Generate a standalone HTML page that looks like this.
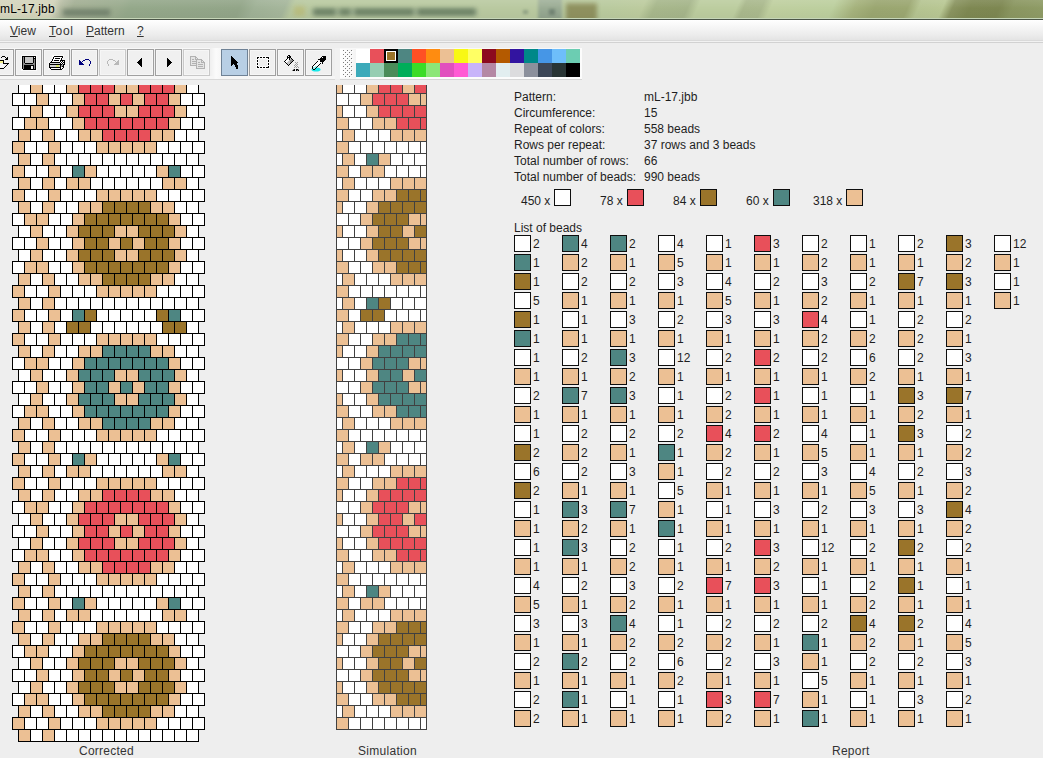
<!DOCTYPE html>
<html><head><meta charset="utf-8"><title>mL-17.jbb</title>
<style>
html,body{margin:0;padding:0}
body{width:1043px;height:758px;overflow:hidden;position:relative;background:#eeeeee;
 font-family:"Liberation Sans",sans-serif;font-size:12px;color:#1e1e1e}
.abs{position:absolute;display:block}
.t{position:absolute;white-space:nowrap;line-height:14px;height:14px}
.lbl{color:#333}
.bx{position:absolute;width:15px;height:15px;border:1px solid #0e0e0e}
.btn{position:absolute;top:49px;width:25px;height:25px;border:1px solid #a0a0a0;background:#f0f0f0;box-shadow:inset 0 0 0 1px #f6f6f6}
.btn.dis{border-color:#c9c9c9}
.btn.sel{border-color:#6f8296;background:#b8cfe5;box-shadow:none}
u{text-decoration:underline}
</style></head><body>

<div class="abs" style="left:0;top:0;width:1043px;height:18px;overflow:hidden;background:#94a88a">
<div style="position:absolute;left:-20px;top:0;width:1090px;height:18px;transform-origin:0 100%;transform:skewX(-24deg);background:
linear-gradient(to right,#d4d5bd 20px,#cfd1b8 66px,#b4bba2 76px,#a2ae93 88px,#9aab8e 134px,#94a88a 145px,#92a588 255px,#9fb196 270px,#a5b69b 300px,#b7c79f 308px,#b9c9a0 320px,#b9c9a0 553px,#b9ca9e 622px,#bccb9e 658px,#a7b78b 670px,#a5b58a 703px,#bccd9f 713px,#bccd9f 752px,#a9b88c 759px,#aab98d 777px,#bfcf9f 786px,#bccf9e 848px,#a5b27c 870px,#9aa670 890px,#9ba771 923px,#b5c491 934px,#b8c793 958px,#8a9460 968px,#7e8852 985px,#7d8751 1015px,#8a9660 1028px,#8f9c66 1063px)"></div>
<div style="position:absolute;left:0;top:0;width:60px;height:18px;background:linear-gradient(to right,#d5d6be 0,#d2d3ba 46px,rgba(210,211,186,0) 60px)"></div>
<div style="position:absolute;left:63px;top:9px;width:47px;height:7px;background:#6e7e6a;filter:blur(2.2px);opacity:.85"></div>
<div style="position:absolute;left:294px;top:6px;width:11px;height:10px;background:#b9bc7c;filter:blur(2px);opacity:.85"></div>
<div style="position:absolute;left:312px;top:8px;width:165px;height:8px;background:#8fa286;filter:blur(2.5px);opacity:.8"></div>
<div style="position:absolute;left:314px;top:9px;width:21px;height:6px;background:#62785c;filter:blur(2.2px);opacity:.8"></div>
<div style="position:absolute;left:340px;top:9px;width:10px;height:6px;background:#62785c;filter:blur(2.2px);opacity:.75"></div>
<div style="position:absolute;left:355px;top:9px;width:58px;height:6px;background:#62785c;filter:blur(2.2px);opacity:.8"></div>
<div style="position:absolute;left:418px;top:9px;width:57px;height:6px;background:#62785c;filter:blur(2.2px);opacity:.8"></div>
<div style="position:absolute;left:538px;top:-4px;width:24px;height:26px;background:linear-gradient(to bottom,#a3b39c,#8c9f8a);filter:blur(1.5px);opacity:.95"></div>
<div style="position:absolute;left:566px;top:3px;width:31px;height:19px;background:#8d8f5c;filter:blur(2px);opacity:.95"></div>
<div style="position:absolute;left:523px;top:10px;width:5px;height:4px;background:#7d9076;filter:blur(1.4px);opacity:.7"></div>
<div style="position:absolute;left:549px;top:9px;width:6px;height:6px;background:#66786a;filter:blur(1.4px);opacity:.75"></div>
<div style="position:absolute;left:0;top:0;width:1043px;height:18px;background:linear-gradient(to bottom,rgba(255,255,255,.10),rgba(255,255,255,.04) 30%,rgba(255,255,255,0) 45%,rgba(0,0,0,.03))"></div>
</div>
<div class="abs" style="left:0;top:18px;width:1043px;height:1px;background:#c6d6b8"></div>
<div class="abs" style="left:0;top:19px;width:1043px;height:1px;background:#4b5648"></div>
<div class="t" style="left:0px;top:2px;color:#000;letter-spacing:.15px;text-shadow:0 0 3px #e2e3cf,0 0 6px #dcddc6">mL-17.jbb</div>

<div class="abs" style="left:0;top:20px;width:1043px;height:21px;background:linear-gradient(to bottom,#ffffff 0,#f7f7f7 30%,#ececec 70%,#e2e2e2 100%)"></div>
<div class="abs" style="left:0;top:40px;width:1043px;height:1px;background:#dadada"></div>
<div class="abs" style="left:0;top:41px;width:1043px;height:1px;background:#f2f2f2"></div>
<div class="abs" style="left:0;top:42px;width:1043px;height:1px;background:#d2d2d2"></div>
<div class="t lbl" style="left:10px;top:24px;letter-spacing:.05px"><u>V</u>iew</div>
<div class="t lbl" style="left:49px;top:24px;letter-spacing:.6px"><u>T</u>ool</div>
<div class="t lbl" style="left:86px;top:24px;letter-spacing:0px"><u>P</u>attern</div>
<div class="t lbl" style="left:137px;top:24px"><u>?</u></div>

<div class="abs" style="left:0;top:48px;width:213px;height:30px;background:#f0f0f0"></div>
<div class="abs" style="left:0;top:48px;width:213px;height:1px;background:#f8f8f8"></div>
<div class="abs" style="left:210px;top:48px;width:11px;height:31px;background:linear-gradient(to right,#efefef,#fbfbfb 55%,#f6f6f6)"></div>
<div class="abs" style="left:221px;top:48px;width:114px;height:30px;background:#f0f0f0"></div>
<div class="abs" style="left:335px;top:48px;width:5px;height:31px;background:#f2f2f2"></div>
<div class="abs" style="left:340px;top:48px;width:242px;height:31px;background:#f8f8f8"></div>
<div class="abs" style="left:340px;top:49px;width:16px;height:29px;background:linear-gradient(to right,#ffffff,#f4f4f4)"></div>
<div class="abs" style="left:0;top:76px;width:213px;height:3px;background:#f6f6f6"></div>
<div class="abs" style="left:221px;top:76px;width:114px;height:3px;background:#f6f6f6"></div>
<div class="abs" style="left:0;top:79px;width:335px;height:1px;background:#d9d9d9"></div>
<div class="abs" style="left:340px;top:79px;width:242px;height:1px;background:#d6d6d6"></div>
<div class="btn" style="left:-13px"></div>
<div class="btn" style="left:15px"></div>
<div class="btn" style="left:43px"></div>
<div class="btn" style="left:71px"></div>
<div class="btn dis" style="left:99px"></div>
<div class="btn" style="left:127px"></div>
<div class="btn" style="left:155px"></div>
<div class="btn dis" style="left:183px"></div>
<div class="btn sel" style="left:221px"></div>
<div class="btn" style="left:249px"></div>
<div class="btn" style="left:277px"></div>
<div class="btn" style="left:305px"></div>
<svg class="abs" style="left:0;top:44px" width="600" height="40" viewBox="0 44 600 40" shape-rendering="crispEdges">
<rect x="1" y="57" width="1" height="1" fill="#000000"/><rect x="2" y="56" width="1" height="1" fill="#000000"/><rect x="3" y="56" width="1" height="1" fill="#000000"/><rect x="4" y="56" width="1" height="1" fill="#000000"/><rect x="5" y="57" width="1" height="1" fill="#000000"/><rect x="6" y="58" width="1" height="1" fill="#000000"/><rect x="7" y="57" width="1" height="1" fill="#000000"/><rect x="7" y="58" width="1" height="1" fill="#000000"/><rect x="7" y="59" width="1" height="1" fill="#000000"/><rect x="6" y="59" width="1" height="1" fill="#000000"/><rect x="5" y="59" width="1" height="1" fill="#000000"/>
<rect x="0" y="60" width="4" height="1" fill="#000"/><rect x="0" y="61" width="3" height="2" fill="#f4f08c"/><rect x="3" y="61" width="1" height="3" fill="#000"/>
<rect x="0" y="64" width="4" height="4" fill="#f6f6f6"/>
<rect x="3" y="63" width="6" height="1" fill="#000"/>
<rect x="8" y="63" width="1" height="1" fill="#000000"/><rect x="7" y="64" width="1" height="1" fill="#000000"/><rect x="6" y="65" width="1" height="1" fill="#000000"/><rect x="5" y="66" width="1" height="1" fill="#000000"/><rect x="4" y="67" width="1" height="1" fill="#000000"/>
<rect x="8" y="64" width="1" height="1" fill="#eeeeee"/><rect x="7" y="65" width="1" height="1" fill="#eeeeee"/><rect x="6" y="66" width="1" height="1" fill="#eeeeee"/><rect x="5" y="67" width="1" height="1" fill="#eeeeee"/><rect x="8" y="65" width="1" height="1" fill="#eeeeee"/><rect x="7" y="66" width="1" height="1" fill="#eeeeee"/><rect x="6" y="67" width="1" height="1" fill="#eeeeee"/><rect x="8" y="66" width="1" height="1" fill="#eeeeee"/><rect x="7" y="67" width="1" height="1" fill="#eeeeee"/><rect x="8" y="67" width="1" height="1" fill="#eeeeee"/>
<rect x="0" y="68" width="4" height="1" fill="#000"/>
<rect x="21" y="55" width="16" height="16" fill="#fbfbfb"/>
<rect x="22" y="56" width="14" height="1" fill="#000"/><rect x="22" y="57" width="1" height="1" fill="#000"/><rect x="23" y="57" width="1" height="1" fill="#8a8a8a"/><rect x="24" y="57" width="1" height="1" fill="#000"/><rect x="25" y="57" width="8" height="1" fill="#c6c6c6"/><rect x="33" y="57" width="1" height="1" fill="#000"/><rect x="34" y="57" width="1" height="1" fill="#f2f2f2"/><rect x="35" y="57" width="1" height="1" fill="#000"/><rect x="22" y="58" width="1" height="1" fill="#000"/><rect x="23" y="58" width="1" height="1" fill="#8a8a8a"/><rect x="24" y="58" width="1" height="1" fill="#000"/><rect x="25" y="58" width="8" height="1" fill="#c6c6c6"/><rect x="33" y="58" width="3" height="1" fill="#000"/><rect x="22" y="59" width="1" height="1" fill="#000"/><rect x="23" y="59" width="1" height="1" fill="#8a8a8a"/><rect x="24" y="59" width="1" height="1" fill="#000"/><rect x="25" y="59" width="8" height="1" fill="#c6c6c6"/><rect x="33" y="59" width="1" height="1" fill="#000"/><rect x="34" y="59" width="1" height="1" fill="#8a8a8a"/><rect x="35" y="59" width="1" height="1" fill="#000"/><rect x="22" y="60" width="1" height="1" fill="#000"/><rect x="23" y="60" width="1" height="1" fill="#8a8a8a"/><rect x="24" y="60" width="1" height="1" fill="#000"/><rect x="25" y="60" width="8" height="1" fill="#c6c6c6"/><rect x="33" y="60" width="1" height="1" fill="#000"/><rect x="34" y="60" width="1" height="1" fill="#8a8a8a"/><rect x="35" y="60" width="1" height="1" fill="#000"/><rect x="22" y="61" width="1" height="1" fill="#000"/><rect x="23" y="61" width="1" height="1" fill="#8a8a8a"/><rect x="24" y="61" width="1" height="1" fill="#000"/><rect x="25" y="61" width="8" height="1" fill="#c6c6c6"/><rect x="33" y="61" width="1" height="1" fill="#000"/><rect x="34" y="61" width="1" height="1" fill="#8a8a8a"/><rect x="35" y="61" width="1" height="1" fill="#000"/><rect x="22" y="62" width="1" height="1" fill="#000"/><rect x="23" y="62" width="1" height="1" fill="#8a8a8a"/><rect x="24" y="62" width="1" height="1" fill="#000"/><rect x="25" y="62" width="8" height="1" fill="#c6c6c6"/><rect x="33" y="62" width="1" height="1" fill="#000"/><rect x="34" y="62" width="1" height="1" fill="#8a8a8a"/><rect x="35" y="62" width="1" height="1" fill="#000"/><rect x="22" y="63" width="1" height="1" fill="#000"/><rect x="23" y="63" width="2" height="1" fill="#8a8a8a"/><rect x="25" y="63" width="8" height="1" fill="#000"/><rect x="33" y="63" width="2" height="1" fill="#8a8a8a"/><rect x="35" y="63" width="1" height="1" fill="#000"/><rect x="22" y="64" width="1" height="1" fill="#000"/><rect x="23" y="64" width="12" height="1" fill="#8a8a8a"/><rect x="35" y="64" width="1" height="1" fill="#000"/><rect x="22" y="65" width="1" height="1" fill="#000"/><rect x="23" y="65" width="1" height="1" fill="#8a8a8a"/><rect x="24" y="65" width="10" height="1" fill="#000"/><rect x="34" y="65" width="1" height="1" fill="#8a8a8a"/><rect x="35" y="65" width="1" height="1" fill="#000"/><rect x="22" y="66" width="1" height="1" fill="#000"/><rect x="23" y="66" width="1" height="1" fill="#8a8a8a"/><rect x="24" y="66" width="7" height="1" fill="#000"/><rect x="31" y="66" width="2" height="1" fill="#f2f2f2"/><rect x="33" y="66" width="1" height="1" fill="#000"/><rect x="34" y="66" width="1" height="1" fill="#8a8a8a"/><rect x="35" y="66" width="1" height="1" fill="#000"/><rect x="22" y="67" width="1" height="1" fill="#000"/><rect x="23" y="67" width="1" height="1" fill="#8a8a8a"/><rect x="24" y="67" width="7" height="1" fill="#000"/><rect x="31" y="67" width="2" height="1" fill="#f2f2f2"/><rect x="33" y="67" width="1" height="1" fill="#000"/><rect x="34" y="67" width="1" height="1" fill="#8a8a8a"/><rect x="35" y="67" width="1" height="1" fill="#000"/><rect x="22" y="68" width="1" height="1" fill="#000"/><rect x="23" y="68" width="1" height="1" fill="#8a8a8a"/><rect x="24" y="68" width="7" height="1" fill="#000"/><rect x="31" y="68" width="2" height="1" fill="#f2f2f2"/><rect x="33" y="68" width="1" height="1" fill="#000"/><rect x="34" y="68" width="1" height="1" fill="#8a8a8a"/><rect x="35" y="68" width="1" height="1" fill="#000"/><rect x="23" y="69" width="13" height="1" fill="#000"/>
<rect x="52" y="55" width="12" height="3" fill="#fbfbfb"/><rect x="48" y="61" width="17" height="9" fill="#f6f6f6"/>
<rect x="54" y="56" width="9" height="1" fill="#000"/><rect x="53" y="57" width="1" height="1" fill="#000"/><rect x="54" y="57" width="8" height="1" fill="#fff"/><rect x="62" y="57" width="1" height="1" fill="#000"/><rect x="53" y="58" width="1" height="1" fill="#000"/><rect x="54" y="58" width="1" height="1" fill="#fff"/><rect x="55" y="58" width="5" height="1" fill="#000"/><rect x="60" y="58" width="1" height="1" fill="#fff"/><rect x="61" y="58" width="1" height="1" fill="#000"/><rect x="52" y="59" width="1" height="1" fill="#000"/><rect x="53" y="59" width="8" height="1" fill="#fff"/><rect x="61" y="59" width="1" height="1" fill="#000"/><rect x="52" y="60" width="1" height="1" fill="#000"/><rect x="53" y="60" width="1" height="1" fill="#fff"/><rect x="54" y="60" width="5" height="1" fill="#000"/><rect x="59" y="60" width="1" height="1" fill="#fff"/><rect x="60" y="60" width="5" height="1" fill="#000"/><rect x="51" y="61" width="1" height="1" fill="#000"/><rect x="52" y="61" width="8" height="1" fill="#fff"/><rect x="60" y="61" width="1" height="1" fill="#000"/><rect x="61" y="61" width="1" height="1" fill="#fff"/><rect x="62" y="61" width="1" height="1" fill="#000"/><rect x="63" y="61" width="1" height="1" fill="#fff"/><rect x="64" y="61" width="1" height="1" fill="#000"/><rect x="50" y="62" width="10" height="1" fill="#000"/><rect x="60" y="62" width="1" height="1" fill="#fff"/><rect x="61" y="62" width="1" height="1" fill="#000"/><rect x="62" y="62" width="1" height="1" fill="#fff"/><rect x="63" y="62" width="2" height="1" fill="#000"/><rect x="49" y="63" width="1" height="1" fill="#000"/><rect x="50" y="63" width="10" height="1" fill="#d4d4d4"/><rect x="60" y="63" width="1" height="1" fill="#000"/><rect x="61" y="63" width="1" height="1" fill="#fff"/><rect x="62" y="63" width="1" height="1" fill="#000"/><rect x="63" y="63" width="1" height="1" fill="#fff"/><rect x="64" y="63" width="1" height="1" fill="#000"/><rect x="49" y="64" width="13" height="1" fill="#000"/><rect x="62" y="64" width="1" height="1" fill="#9a9a9a"/><rect x="63" y="64" width="2" height="1" fill="#000"/><rect x="49" y="65" width="1" height="1" fill="#000"/><rect x="50" y="65" width="6" height="1" fill="#d4d4d4"/><rect x="56" y="65" width="3" height="1" fill="#dfe86a"/><rect x="59" y="65" width="1" height="1" fill="#d4d4d4"/><rect x="60" y="65" width="1" height="1" fill="#000"/><rect x="61" y="65" width="2" height="1" fill="#9a9a9a"/><rect x="63" y="65" width="1" height="1" fill="#000"/><rect x="49" y="66" width="1" height="1" fill="#000"/><rect x="50" y="66" width="6" height="1" fill="#d4d4d4"/><rect x="56" y="66" width="3" height="1" fill="#dfe86a"/><rect x="59" y="66" width="1" height="1" fill="#d4d4d4"/><rect x="60" y="66" width="1" height="1" fill="#000"/><rect x="61" y="66" width="1" height="1" fill="#9a9a9a"/><rect x="62" y="66" width="2" height="1" fill="#000"/><rect x="49" y="67" width="12" height="1" fill="#000"/><rect x="61" y="67" width="2" height="1" fill="#fff"/><rect x="63" y="67" width="1" height="1" fill="#000"/><rect x="50" y="68" width="1" height="1" fill="#000"/><rect x="51" y="68" width="9" height="1" fill="#fff"/><rect x="60" y="68" width="1" height="1" fill="#000"/><rect x="61" y="68" width="1" height="1" fill="#fff"/><rect x="62" y="68" width="1" height="1" fill="#000"/><rect x="51" y="69" width="11" height="1" fill="#000"/>
<rect x="85" y="59" width="1" height="1" fill="#00007e"/><rect x="86" y="59" width="1" height="1" fill="#00007e"/><rect x="87" y="59" width="1" height="1" fill="#00007e"/><rect x="88" y="59" width="1" height="1" fill="#00007e"/><rect x="79" y="60" width="1" height="1" fill="#00007e"/><rect x="83" y="60" width="1" height="1" fill="#00007e"/><rect x="84" y="60" width="1" height="1" fill="#00007e"/><rect x="89" y="60" width="1" height="1" fill="#00007e"/><rect x="79" y="61" width="1" height="1" fill="#00007e"/><rect x="80" y="61" width="1" height="1" fill="#00007e"/><rect x="82" y="61" width="1" height="1" fill="#00007e"/><rect x="90" y="61" width="1" height="1" fill="#00007e"/><rect x="79" y="62" width="1" height="1" fill="#00007e"/><rect x="80" y="62" width="1" height="1" fill="#00007e"/><rect x="81" y="62" width="1" height="1" fill="#00007e"/><rect x="90" y="62" width="1" height="1" fill="#00007e"/><rect x="79" y="63" width="1" height="1" fill="#00007e"/><rect x="80" y="63" width="1" height="1" fill="#00007e"/><rect x="81" y="63" width="1" height="1" fill="#00007e"/><rect x="82" y="63" width="1" height="1" fill="#00007e"/><rect x="90" y="63" width="1" height="1" fill="#00007e"/><rect x="79" y="64" width="1" height="1" fill="#00007e"/><rect x="80" y="64" width="1" height="1" fill="#00007e"/><rect x="81" y="64" width="1" height="1" fill="#00007e"/><rect x="82" y="64" width="1" height="1" fill="#00007e"/><rect x="83" y="64" width="1" height="1" fill="#00007e"/><rect x="89" y="64" width="1" height="1" fill="#00007e"/><rect x="89" y="65" width="1" height="1" fill="#00007e"/>
<rect x="112" y="59" width="1" height="1" fill="#b9b9b9"/><rect x="111" y="59" width="1" height="1" fill="#b9b9b9"/><rect x="110" y="59" width="1" height="1" fill="#b9b9b9"/><rect x="109" y="59" width="1" height="1" fill="#b9b9b9"/><rect x="118" y="60" width="1" height="1" fill="#b9b9b9"/><rect x="114" y="60" width="1" height="1" fill="#b9b9b9"/><rect x="113" y="60" width="1" height="1" fill="#b9b9b9"/><rect x="108" y="60" width="1" height="1" fill="#b9b9b9"/><rect x="118" y="61" width="1" height="1" fill="#b9b9b9"/><rect x="117" y="61" width="1" height="1" fill="#b9b9b9"/><rect x="115" y="61" width="1" height="1" fill="#b9b9b9"/><rect x="107" y="61" width="1" height="1" fill="#b9b9b9"/><rect x="118" y="62" width="1" height="1" fill="#b9b9b9"/><rect x="117" y="62" width="1" height="1" fill="#b9b9b9"/><rect x="116" y="62" width="1" height="1" fill="#b9b9b9"/><rect x="107" y="62" width="1" height="1" fill="#b9b9b9"/><rect x="118" y="63" width="1" height="1" fill="#b9b9b9"/><rect x="117" y="63" width="1" height="1" fill="#b9b9b9"/><rect x="116" y="63" width="1" height="1" fill="#b9b9b9"/><rect x="115" y="63" width="1" height="1" fill="#b9b9b9"/><rect x="107" y="63" width="1" height="1" fill="#b9b9b9"/><rect x="118" y="64" width="1" height="1" fill="#b9b9b9"/><rect x="117" y="64" width="1" height="1" fill="#b9b9b9"/><rect x="116" y="64" width="1" height="1" fill="#b9b9b9"/><rect x="115" y="64" width="1" height="1" fill="#b9b9b9"/><rect x="114" y="64" width="1" height="1" fill="#b9b9b9"/><rect x="108" y="64" width="1" height="1" fill="#b9b9b9"/><rect x="108" y="65" width="1" height="1" fill="#b9b9b9"/>
<rect x="141" y="58" width="1" height="9" fill="#000"/>
<rect x="140" y="59" width="1" height="7" fill="#000"/>
<rect x="139" y="60" width="1" height="5" fill="#000"/>
<rect x="138" y="61" width="1" height="3" fill="#000"/>
<rect x="137" y="62" width="1" height="1" fill="#000"/>
<rect x="167" y="58" width="1" height="9" fill="#000"/>
<rect x="168" y="59" width="1" height="7" fill="#000"/>
<rect x="169" y="60" width="1" height="5" fill="#000"/>
<rect x="170" y="61" width="1" height="3" fill="#000"/>
<rect x="171" y="62" width="1" height="1" fill="#000"/>
<rect x="190" y="56" width="6" height="1" fill="#b2b2b2"/><rect x="190" y="57" width="1" height="1" fill="#b2b2b2"/><rect x="191" y="57" width="4" height="1" fill="#e4e4e4"/><rect x="195" y="57" width="2" height="1" fill="#b2b2b2"/><rect x="190" y="58" width="1" height="1" fill="#b2b2b2"/><rect x="191" y="58" width="4" height="1" fill="#e4e4e4"/><rect x="195" y="58" width="1" height="1" fill="#b2b2b2"/><rect x="196" y="58" width="1" height="1" fill="#e4e4e4"/><rect x="197" y="58" width="1" height="1" fill="#b2b2b2"/><rect x="190" y="59" width="1" height="1" fill="#b2b2b2"/><rect x="191" y="59" width="1" height="1" fill="#e4e4e4"/><rect x="192" y="59" width="2" height="1" fill="#b2b2b2"/><rect x="194" y="59" width="1" height="1" fill="#e4e4e4"/><rect x="195" y="59" width="4" height="1" fill="#b2b2b2"/><rect x="190" y="60" width="1" height="1" fill="#b2b2b2"/><rect x="191" y="60" width="7" height="1" fill="#e4e4e4"/><rect x="198" y="60" width="1" height="1" fill="#b2b2b2"/><rect x="190" y="61" width="1" height="1" fill="#b2b2b2"/><rect x="191" y="61" width="1" height="1" fill="#e4e4e4"/><rect x="192" y="61" width="5" height="1" fill="#b2b2b2"/><rect x="197" y="61" width="1" height="1" fill="#e4e4e4"/><rect x="198" y="61" width="1" height="1" fill="#b2b2b2"/><rect x="190" y="62" width="1" height="1" fill="#b2b2b2"/><rect x="191" y="62" width="7" height="1" fill="#e4e4e4"/><rect x="198" y="62" width="1" height="1" fill="#b2b2b2"/><rect x="190" y="63" width="1" height="1" fill="#b2b2b2"/><rect x="191" y="63" width="1" height="1" fill="#e4e4e4"/><rect x="192" y="63" width="5" height="1" fill="#b2b2b2"/><rect x="197" y="63" width="1" height="1" fill="#e4e4e4"/><rect x="198" y="63" width="1" height="1" fill="#b2b2b2"/><rect x="190" y="64" width="1" height="1" fill="#b2b2b2"/><rect x="191" y="64" width="7" height="1" fill="#e4e4e4"/><rect x="198" y="64" width="1" height="1" fill="#b2b2b2"/><rect x="190" y="65" width="9" height="1" fill="#b2b2b2"/>
<rect x="196" y="59" width="6" height="1" fill="#b2b2b2"/><rect x="196" y="60" width="1" height="1" fill="#b2b2b2"/><rect x="197" y="60" width="4" height="1" fill="#e4e4e4"/><rect x="201" y="60" width="2" height="1" fill="#b2b2b2"/><rect x="196" y="61" width="1" height="1" fill="#b2b2b2"/><rect x="197" y="61" width="4" height="1" fill="#e4e4e4"/><rect x="201" y="61" width="1" height="1" fill="#b2b2b2"/><rect x="202" y="61" width="1" height="1" fill="#e4e4e4"/><rect x="203" y="61" width="1" height="1" fill="#b2b2b2"/><rect x="196" y="62" width="1" height="1" fill="#b2b2b2"/><rect x="197" y="62" width="1" height="1" fill="#e4e4e4"/><rect x="198" y="62" width="2" height="1" fill="#b2b2b2"/><rect x="200" y="62" width="1" height="1" fill="#e4e4e4"/><rect x="201" y="62" width="4" height="1" fill="#b2b2b2"/><rect x="196" y="63" width="1" height="1" fill="#b2b2b2"/><rect x="197" y="63" width="7" height="1" fill="#e4e4e4"/><rect x="204" y="63" width="1" height="1" fill="#b2b2b2"/><rect x="196" y="64" width="1" height="1" fill="#b2b2b2"/><rect x="197" y="64" width="1" height="1" fill="#e4e4e4"/><rect x="198" y="64" width="5" height="1" fill="#b2b2b2"/><rect x="203" y="64" width="1" height="1" fill="#e4e4e4"/><rect x="204" y="64" width="1" height="1" fill="#b2b2b2"/><rect x="196" y="65" width="1" height="1" fill="#b2b2b2"/><rect x="197" y="65" width="7" height="1" fill="#e4e4e4"/><rect x="204" y="65" width="1" height="1" fill="#b2b2b2"/><rect x="196" y="66" width="1" height="1" fill="#b2b2b2"/><rect x="197" y="66" width="1" height="1" fill="#e4e4e4"/><rect x="198" y="66" width="5" height="1" fill="#b2b2b2"/><rect x="203" y="66" width="1" height="1" fill="#e4e4e4"/><rect x="204" y="66" width="1" height="1" fill="#b2b2b2"/><rect x="196" y="67" width="1" height="1" fill="#b2b2b2"/><rect x="197" y="67" width="7" height="1" fill="#e4e4e4"/><rect x="204" y="67" width="1" height="1" fill="#b2b2b2"/><rect x="196" y="68" width="9" height="1" fill="#b2b2b2"/>
<rect x="231" y="56" width="1" height="1" fill="#000"/><rect x="231" y="57" width="2" height="1" fill="#000"/><rect x="231" y="58" width="3" height="1" fill="#000"/><rect x="231" y="59" width="4" height="1" fill="#000"/><rect x="231" y="60" width="5" height="1" fill="#000"/><rect x="231" y="61" width="6" height="1" fill="#000"/><rect x="231" y="62" width="7" height="1" fill="#000"/><rect x="231" y="63" width="6" height="1" fill="#000"/><rect x="231" y="64" width="2" height="1" fill="#000"/><rect x="234" y="64" width="3" height="1" fill="#000"/><rect x="231" y="65" width="1" height="1" fill="#000"/><rect x="235" y="65" width="3" height="1" fill="#000"/><rect x="235" y="66" width="3" height="1" fill="#000"/><rect x="236" y="67" width="2" height="1" fill="#000"/><rect x="236" y="68" width="2" height="1" fill="#000"/>
<rect x="256" y="56" width="14" height="13" fill="#fafafa"/><rect x="259" y="59" width="8" height="7" fill="#eeeeee"/>
<rect x="257" y="57" width="2" height="1" fill="#000"/><rect x="257" y="67" width="2" height="1" fill="#000"/>
<rect x="260" y="57" width="2" height="1" fill="#000"/><rect x="260" y="67" width="2" height="1" fill="#000"/>
<rect x="263" y="57" width="2" height="1" fill="#000"/><rect x="263" y="67" width="2" height="1" fill="#000"/>
<rect x="266" y="57" width="3" height="1" fill="#000"/><rect x="266" y="67" width="3" height="1" fill="#000"/>
<rect x="257" y="57" width="1" height="2" fill="#000"/><rect x="268" y="57" width="1" height="2" fill="#000"/>
<rect x="257" y="60" width="1" height="2" fill="#000"/><rect x="268" y="60" width="1" height="2" fill="#000"/>
<rect x="257" y="63" width="1" height="2" fill="#000"/><rect x="268" y="63" width="1" height="2" fill="#000"/>
<rect x="257" y="66" width="1" height="2" fill="#000"/><rect x="268" y="66" width="1" height="2" fill="#000"/>
<rect x="285" y="61" width="1" height="1" fill="#ffffff"/><rect x="286" y="60" width="1" height="1" fill="#ffffff"/><rect x="286" y="61" width="1" height="1" fill="#ffffff"/><rect x="286" y="62" width="1" height="1" fill="#ffffff"/><rect x="287" y="59" width="1" height="1" fill="#ffffff"/><rect x="287" y="60" width="1" height="1" fill="#ffffff"/><rect x="287" y="61" width="1" height="1" fill="#ffffff"/><rect x="288" y="58" width="1" height="1" fill="#ffffff"/><rect x="288" y="59" width="1" height="1" fill="#ffffff"/><rect x="288" y="60" width="1" height="1" fill="#ffffff"/>
<rect x="287" y="62" width="1" height="1" fill="#c4c4c4"/><rect x="287" y="63" width="1" height="1" fill="#c4c4c4"/><rect x="288" y="61" width="1" height="1" fill="#c4c4c4"/><rect x="288" y="62" width="1" height="1" fill="#c4c4c4"/><rect x="288" y="63" width="1" height="1" fill="#c4c4c4"/><rect x="288" y="64" width="1" height="1" fill="#c4c4c4"/><rect x="289" y="60" width="1" height="1" fill="#c4c4c4"/><rect x="289" y="61" width="1" height="1" fill="#c4c4c4"/><rect x="289" y="62" width="1" height="1" fill="#c4c4c4"/><rect x="289" y="63" width="1" height="1" fill="#c4c4c4"/><rect x="290" y="58" width="1" height="1" fill="#c4c4c4"/><rect x="290" y="59" width="1" height="1" fill="#c4c4c4"/>
<rect x="290" y="60" width="1" height="1" fill="#8c8c8c"/><rect x="290" y="61" width="1" height="1" fill="#8c8c8c"/><rect x="290" y="62" width="1" height="1" fill="#8c8c8c"/><rect x="291" y="59" width="1" height="1" fill="#8c8c8c"/><rect x="291" y="60" width="1" height="1" fill="#8c8c8c"/><rect x="291" y="61" width="1" height="1" fill="#8c8c8c"/><rect x="292" y="60" width="1" height="1" fill="#8c8c8c"/>
<rect x="284" y="61" width="1" height="1" fill="#000000"/><rect x="285" y="60" width="1" height="1" fill="#000000"/><rect x="286" y="59" width="1" height="1" fill="#000000"/><rect x="287" y="58" width="1" height="1" fill="#000000"/><rect x="288" y="57" width="1" height="1" fill="#000000"/><rect x="289" y="57" width="1" height="1" fill="#000000"/><rect x="290" y="57" width="1" height="1" fill="#000000"/><rect x="291" y="58" width="1" height="1" fill="#000000"/><rect x="292" y="59" width="1" height="1" fill="#000000"/><rect x="293" y="60" width="1" height="1" fill="#000000"/><rect x="292" y="61" width="1" height="1" fill="#000000"/><rect x="291" y="62" width="1" height="1" fill="#000000"/><rect x="290" y="63" width="1" height="1" fill="#000000"/><rect x="289" y="64" width="1" height="1" fill="#000000"/><rect x="288" y="65" width="1" height="1" fill="#000000"/><rect x="287" y="64" width="1" height="1" fill="#000000"/><rect x="286" y="63" width="1" height="1" fill="#000000"/><rect x="285" y="62" width="1" height="1" fill="#000000"/>
<rect x="288" y="55" width="1" height="1" fill="#000000"/><rect x="289" y="55" width="1" height="1" fill="#000000"/><rect x="287" y="56" width="1" height="1" fill="#000000"/><rect x="287" y="57" width="1" height="1" fill="#000000"/><rect x="290" y="56" width="1" height="1" fill="#000000"/><rect x="289" y="58" width="1" height="1" fill="#000000"/><rect x="289" y="59" width="1" height="1" fill="#000000"/><rect x="289" y="56" width="1" height="1" fill="#000000"/>
<rect x="295" y="62" width="1" height="1" fill="#9c9c9c"/><rect x="297" y="62" width="1" height="1" fill="#9c9c9c"/><rect x="296" y="63" width="1" height="1" fill="#9c9c9c"/><rect x="295" y="64" width="1" height="1" fill="#9c9c9c"/><rect x="297" y="64" width="1" height="1" fill="#9c9c9c"/><rect x="296" y="65" width="1" height="1" fill="#9c9c9c"/><rect x="294" y="65" width="1" height="1" fill="#9c9c9c"/><rect x="295" y="66" width="1" height="1" fill="#9c9c9c"/><rect x="297" y="66" width="1" height="1" fill="#9c9c9c"/><rect x="296" y="67" width="1" height="1" fill="#9c9c9c"/><rect x="298" y="67" width="1" height="1" fill="#9c9c9c"/><rect x="294" y="67" width="1" height="1" fill="#9c9c9c"/>
<rect x="294" y="69" width="1" height="1" fill="#000000"/><rect x="293" y="70" width="1" height="1" fill="#000000"/><rect x="294" y="70" width="1" height="1" fill="#000000"/><rect x="296" y="69" width="1" height="1" fill="#000000"/><rect x="297" y="69" width="1" height="1" fill="#000000"/><rect x="296" y="70" width="1" height="1" fill="#000000"/><rect x="298" y="70" width="1" height="1" fill="#000000"/>
<rect x="293" y="69" width="1" height="1" fill="#8e8e8e"/><rect x="292" y="70" width="1" height="1" fill="#8e8e8e"/><rect x="298" y="69" width="1" height="1" fill="#8e8e8e"/><rect x="297" y="70" width="1" height="1" fill="#8e8e8e"/>
<ellipse cx="316" cy="69.5" rx="4.5" ry="2" fill="#19e8e8" shape-rendering="auto"/>
<rect x="322" y="56" width="4" height="1" fill="#000"/><rect x="321" y="57" width="1" height="1" fill="#000"/><rect x="322" y="57" width="1" height="1" fill="#fff"/><rect x="323" y="57" width="3" height="1" fill="#000"/><rect x="320" y="58" width="6" height="1" fill="#000"/><rect x="318" y="59" width="8" height="1" fill="#000"/><rect x="320" y="60" width="5" height="1" fill="#000"/><rect x="320" y="61" width="4" height="1" fill="#000"/><rect x="322" y="62" width="1" height="1" fill="#000"/><rect x="322" y="63" width="1" height="1" fill="#000"/>
<rect x="317" y="61" width="1" height="1" fill="#000000"/><rect x="316" y="62" width="1" height="1" fill="#000000"/><rect x="315" y="63" width="1" height="1" fill="#000000"/><rect x="314" y="64" width="1" height="1" fill="#000000"/><rect x="313" y="65" width="1" height="1" fill="#000000"/><rect x="312" y="66" width="1" height="1" fill="#000000"/><rect x="312" y="67" width="1" height="1" fill="#000000"/><rect x="312" y="68" width="1" height="1" fill="#000000"/><rect x="313" y="69" width="1" height="1" fill="#000000"/><rect x="314" y="69" width="1" height="1" fill="#000000"/><rect x="320" y="63" width="1" height="1" fill="#000000"/><rect x="319" y="64" width="1" height="1" fill="#000000"/><rect x="318" y="65" width="1" height="1" fill="#000000"/><rect x="317" y="66" width="1" height="1" fill="#000000"/><rect x="316" y="67" width="1" height="1" fill="#000000"/><rect x="315" y="68" width="1" height="1" fill="#000000"/>
<rect x="318" y="61" width="1" height="1" fill="#ffffff"/><rect x="319" y="61" width="1" height="1" fill="#ffffff"/><rect x="317" y="62" width="1" height="1" fill="#ffffff"/><rect x="318" y="62" width="1" height="1" fill="#ffffff"/><rect x="319" y="62" width="1" height="1" fill="#ffffff"/><rect x="316" y="63" width="1" height="1" fill="#ffffff"/><rect x="317" y="63" width="1" height="1" fill="#ffffff"/><rect x="318" y="63" width="1" height="1" fill="#ffffff"/><rect x="319" y="63" width="1" height="1" fill="#ffffff"/><rect x="315" y="64" width="1" height="1" fill="#ffffff"/><rect x="316" y="64" width="1" height="1" fill="#ffffff"/><rect x="317" y="64" width="1" height="1" fill="#ffffff"/><rect x="318" y="64" width="1" height="1" fill="#ffffff"/><rect x="314" y="65" width="1" height="1" fill="#ffffff"/><rect x="315" y="65" width="1" height="1" fill="#ffffff"/><rect x="316" y="65" width="1" height="1" fill="#ffffff"/><rect x="317" y="65" width="1" height="1" fill="#ffffff"/><rect x="313" y="66" width="1" height="1" fill="#ffffff"/><rect x="314" y="66" width="1" height="1" fill="#ffffff"/>
<rect x="315" y="66" width="1" height="1" fill="#9af0f0"/><rect x="316" y="66" width="1" height="1" fill="#9af0f0"/><rect x="313" y="67" width="1" height="1" fill="#9af0f0"/><rect x="314" y="67" width="1" height="1" fill="#9af0f0"/><rect x="315" y="67" width="1" height="1" fill="#9af0f0"/><rect x="313" y="68" width="1" height="1" fill="#9af0f0"/><rect x="314" y="68" width="1" height="1" fill="#9af0f0"/>
<rect x="343" y="50" width="1" height="1" fill="#7c7c7c"/><rect x="344" y="51" width="1" height="1" fill="#ffffff"/>
<rect x="347" y="50" width="1" height="1" fill="#7c7c7c"/><rect x="348" y="51" width="1" height="1" fill="#ffffff"/>
<rect x="351" y="50" width="1" height="1" fill="#7c7c7c"/><rect x="352" y="51" width="1" height="1" fill="#ffffff"/>
<rect x="345" y="52" width="1" height="1" fill="#7c7c7c"/><rect x="346" y="53" width="1" height="1" fill="#ffffff"/>
<rect x="349" y="52" width="1" height="1" fill="#7c7c7c"/><rect x="350" y="53" width="1" height="1" fill="#ffffff"/>
<rect x="343" y="54" width="1" height="1" fill="#7c7c7c"/><rect x="344" y="55" width="1" height="1" fill="#ffffff"/>
<rect x="347" y="54" width="1" height="1" fill="#7c7c7c"/><rect x="348" y="55" width="1" height="1" fill="#ffffff"/>
<rect x="351" y="54" width="1" height="1" fill="#7c7c7c"/><rect x="352" y="55" width="1" height="1" fill="#ffffff"/>
<rect x="345" y="56" width="1" height="1" fill="#7c7c7c"/><rect x="346" y="57" width="1" height="1" fill="#ffffff"/>
<rect x="349" y="56" width="1" height="1" fill="#7c7c7c"/><rect x="350" y="57" width="1" height="1" fill="#ffffff"/>
<rect x="343" y="58" width="1" height="1" fill="#7c7c7c"/><rect x="344" y="59" width="1" height="1" fill="#ffffff"/>
<rect x="347" y="58" width="1" height="1" fill="#7c7c7c"/><rect x="348" y="59" width="1" height="1" fill="#ffffff"/>
<rect x="351" y="58" width="1" height="1" fill="#7c7c7c"/><rect x="352" y="59" width="1" height="1" fill="#ffffff"/>
<rect x="345" y="60" width="1" height="1" fill="#7c7c7c"/><rect x="346" y="61" width="1" height="1" fill="#ffffff"/>
<rect x="349" y="60" width="1" height="1" fill="#7c7c7c"/><rect x="350" y="61" width="1" height="1" fill="#ffffff"/>
<rect x="343" y="62" width="1" height="1" fill="#7c7c7c"/><rect x="344" y="63" width="1" height="1" fill="#ffffff"/>
<rect x="347" y="62" width="1" height="1" fill="#7c7c7c"/><rect x="348" y="63" width="1" height="1" fill="#ffffff"/>
<rect x="351" y="62" width="1" height="1" fill="#7c7c7c"/><rect x="352" y="63" width="1" height="1" fill="#ffffff"/>
<rect x="345" y="64" width="1" height="1" fill="#7c7c7c"/><rect x="346" y="65" width="1" height="1" fill="#ffffff"/>
<rect x="349" y="64" width="1" height="1" fill="#7c7c7c"/><rect x="350" y="65" width="1" height="1" fill="#ffffff"/>
<rect x="343" y="66" width="1" height="1" fill="#7c7c7c"/><rect x="344" y="67" width="1" height="1" fill="#ffffff"/>
<rect x="347" y="66" width="1" height="1" fill="#7c7c7c"/><rect x="348" y="67" width="1" height="1" fill="#ffffff"/>
<rect x="351" y="66" width="1" height="1" fill="#7c7c7c"/><rect x="352" y="67" width="1" height="1" fill="#ffffff"/>
<rect x="345" y="68" width="1" height="1" fill="#7c7c7c"/><rect x="346" y="69" width="1" height="1" fill="#ffffff"/>
<rect x="349" y="68" width="1" height="1" fill="#7c7c7c"/><rect x="350" y="69" width="1" height="1" fill="#ffffff"/>
<rect x="343" y="70" width="1" height="1" fill="#7c7c7c"/><rect x="344" y="71" width="1" height="1" fill="#ffffff"/>
<rect x="347" y="70" width="1" height="1" fill="#7c7c7c"/><rect x="348" y="71" width="1" height="1" fill="#ffffff"/>
<rect x="351" y="70" width="1" height="1" fill="#7c7c7c"/><rect x="352" y="71" width="1" height="1" fill="#ffffff"/>
<rect x="345" y="72" width="1" height="1" fill="#7c7c7c"/><rect x="346" y="73" width="1" height="1" fill="#ffffff"/>
<rect x="349" y="72" width="1" height="1" fill="#7c7c7c"/><rect x="350" y="73" width="1" height="1" fill="#ffffff"/>
<rect x="343" y="74" width="1" height="1" fill="#7c7c7c"/><rect x="344" y="75" width="1" height="1" fill="#ffffff"/>
<rect x="347" y="74" width="1" height="1" fill="#7c7c7c"/><rect x="348" y="75" width="1" height="1" fill="#ffffff"/>
<rect x="351" y="74" width="1" height="1" fill="#7c7c7c"/><rect x="352" y="75" width="1" height="1" fill="#ffffff"/>
<rect x="345" y="76" width="1" height="1" fill="#7c7c7c"/><rect x="346" y="77" width="1" height="1" fill="#ffffff"/>
<rect x="349" y="76" width="1" height="1" fill="#7c7c7c"/><rect x="350" y="77" width="1" height="1" fill="#ffffff"/>
<rect x="356" y="49" width="14" height="14" fill="#ffffff"/>
<rect x="370" y="49" width="14" height="14" fill="#e8505a"/>
<rect x="384" y="49" width="14" height="14" fill="#9a742a"/>
<rect x="398" y="49" width="14" height="14" fill="#4e8682"/>
<rect x="412" y="49" width="14" height="14" fill="#ff5024"/>
<rect x="426" y="49" width="14" height="14" fill="#ff8c10"/>
<rect x="440" y="49" width="14" height="14" fill="#ecc094"/>
<rect x="454" y="49" width="14" height="14" fill="#f8f814"/>
<rect x="468" y="49" width="14" height="14" fill="#ffff64"/>
<rect x="482" y="49" width="14" height="14" fill="#8c0a1e"/>
<rect x="496" y="49" width="14" height="14" fill="#b45a00"/>
<rect x="510" y="49" width="14" height="14" fill="#3214a0"/>
<rect x="524" y="49" width="14" height="14" fill="#008888"/>
<rect x="538" y="49" width="14" height="14" fill="#4696e6"/>
<rect x="552" y="49" width="14" height="14" fill="#6ebefa"/>
<rect x="566" y="49" width="14" height="14" fill="#6ccdb2"/>
<rect x="356" y="63" width="14" height="14" fill="#3caaba"/>
<rect x="370" y="63" width="14" height="14" fill="#96cdb2"/>
<rect x="384" y="63" width="14" height="14" fill="#4b8c5a"/>
<rect x="398" y="63" width="14" height="14" fill="#00ae5a"/>
<rect x="412" y="63" width="14" height="14" fill="#3cdc28"/>
<rect x="426" y="63" width="14" height="14" fill="#8ce678"/>
<rect x="440" y="63" width="14" height="14" fill="#e150be"/>
<rect x="454" y="63" width="14" height="14" fill="#ff5ad4"/>
<rect x="468" y="63" width="14" height="14" fill="#c8b4fa"/>
<rect x="482" y="63" width="14" height="14" fill="#b488a4"/>
<rect x="496" y="63" width="14" height="14" fill="#e2eef0"/>
<rect x="510" y="63" width="14" height="14" fill="#dcdcde"/>
<rect x="524" y="63" width="14" height="14" fill="#8c909c"/>
<rect x="538" y="63" width="14" height="14" fill="#3c4656"/>
<rect x="552" y="63" width="14" height="14" fill="#283434"/>
<rect x="566" y="63" width="14" height="14" fill="#000000"/>
<rect x="384" y="49" width="14" height="14" fill="#000"/><rect x="386" y="51" width="10" height="10" fill="#fff"/><rect x="387" y="52" width="8" height="8" fill="#9a742a"/>
<rect x="580" y="48" width="2" height="31" fill="#fcfcfc"/><rect x="356" y="77" width="226" height="2" fill="#fcfcfc"/>
</svg>
<svg class="abs" style="left:0;top:85px" width="220" height="660" viewBox="0 85 220 660" shape-rendering="crispEdges"><rect x="18" y="81" width="181" height="13" fill="#000"/><rect x="19" y="82" width="11" height="11" fill="#ffffff"/><rect x="31" y="82" width="11" height="11" fill="#ecc094"/><rect x="43" y="82" width="11" height="11" fill="#ffffff"/><rect x="55" y="82" width="11" height="11" fill="#ffffff"/><rect x="67" y="82" width="11" height="11" fill="#ecc094"/><rect x="79" y="82" width="11" height="11" fill="#e8505a"/><rect x="91" y="82" width="11" height="11" fill="#e8505a"/><rect x="103" y="82" width="11" height="11" fill="#e8505a"/><rect x="115" y="82" width="11" height="11" fill="#ecc094"/><rect x="127" y="82" width="11" height="11" fill="#ecc094"/><rect x="139" y="82" width="11" height="11" fill="#e8505a"/><rect x="151" y="82" width="11" height="11" fill="#e8505a"/><rect x="163" y="82" width="11" height="11" fill="#e8505a"/><rect x="175" y="82" width="11" height="11" fill="#ecc094"/><rect x="187" y="82" width="11" height="11" fill="#ffffff"/><rect x="12" y="93" width="193" height="13" fill="#000"/><rect x="13" y="94" width="11" height="11" fill="#ffffff"/><rect x="25" y="94" width="11" height="11" fill="#ffffff"/><rect x="37" y="94" width="11" height="11" fill="#ecc094"/><rect x="49" y="94" width="11" height="11" fill="#ffffff"/><rect x="61" y="94" width="11" height="11" fill="#ffffff"/><rect x="73" y="94" width="11" height="11" fill="#ecc094"/><rect x="85" y="94" width="11" height="11" fill="#e8505a"/><rect x="97" y="94" width="11" height="11" fill="#e8505a"/><rect x="109" y="94" width="11" height="11" fill="#ecc094"/><rect x="121" y="94" width="11" height="11" fill="#e8505a"/><rect x="133" y="94" width="11" height="11" fill="#ecc094"/><rect x="145" y="94" width="11" height="11" fill="#e8505a"/><rect x="157" y="94" width="11" height="11" fill="#e8505a"/><rect x="169" y="94" width="11" height="11" fill="#ecc094"/><rect x="181" y="94" width="11" height="11" fill="#ffffff"/><rect x="193" y="94" width="11" height="11" fill="#ffffff"/><rect x="18" y="105" width="181" height="13" fill="#000"/><rect x="19" y="106" width="11" height="11" fill="#ffffff"/><rect x="31" y="106" width="11" height="11" fill="#ecc094"/><rect x="43" y="106" width="11" height="11" fill="#ffffff"/><rect x="55" y="106" width="11" height="11" fill="#ffffff"/><rect x="67" y="106" width="11" height="11" fill="#ecc094"/><rect x="79" y="106" width="11" height="11" fill="#e8505a"/><rect x="91" y="106" width="11" height="11" fill="#e8505a"/><rect x="103" y="106" width="11" height="11" fill="#e8505a"/><rect x="115" y="106" width="11" height="11" fill="#ecc094"/><rect x="127" y="106" width="11" height="11" fill="#ecc094"/><rect x="139" y="106" width="11" height="11" fill="#e8505a"/><rect x="151" y="106" width="11" height="11" fill="#e8505a"/><rect x="163" y="106" width="11" height="11" fill="#e8505a"/><rect x="175" y="106" width="11" height="11" fill="#ecc094"/><rect x="187" y="106" width="11" height="11" fill="#ffffff"/><rect x="12" y="117" width="193" height="13" fill="#000"/><rect x="13" y="118" width="11" height="11" fill="#ffffff"/><rect x="25" y="118" width="11" height="11" fill="#ecc094"/><rect x="37" y="118" width="11" height="11" fill="#ecc094"/><rect x="49" y="118" width="11" height="11" fill="#ffffff"/><rect x="61" y="118" width="11" height="11" fill="#ffffff"/><rect x="73" y="118" width="11" height="11" fill="#ecc094"/><rect x="85" y="118" width="11" height="11" fill="#e8505a"/><rect x="97" y="118" width="11" height="11" fill="#e8505a"/><rect x="109" y="118" width="11" height="11" fill="#e8505a"/><rect x="121" y="118" width="11" height="11" fill="#e8505a"/><rect x="133" y="118" width="11" height="11" fill="#e8505a"/><rect x="145" y="118" width="11" height="11" fill="#e8505a"/><rect x="157" y="118" width="11" height="11" fill="#e8505a"/><rect x="169" y="118" width="11" height="11" fill="#ecc094"/><rect x="181" y="118" width="11" height="11" fill="#ffffff"/><rect x="193" y="118" width="11" height="11" fill="#ffffff"/><rect x="18" y="129" width="181" height="13" fill="#000"/><rect x="19" y="130" width="11" height="11" fill="#ecc094"/><rect x="31" y="130" width="11" height="11" fill="#ffffff"/><rect x="43" y="130" width="11" height="11" fill="#ecc094"/><rect x="55" y="130" width="11" height="11" fill="#ffffff"/><rect x="67" y="130" width="11" height="11" fill="#ffffff"/><rect x="79" y="130" width="11" height="11" fill="#ecc094"/><rect x="91" y="130" width="11" height="11" fill="#ecc094"/><rect x="103" y="130" width="11" height="11" fill="#e8505a"/><rect x="115" y="130" width="11" height="11" fill="#e8505a"/><rect x="127" y="130" width="11" height="11" fill="#e8505a"/><rect x="139" y="130" width="11" height="11" fill="#e8505a"/><rect x="151" y="130" width="11" height="11" fill="#ecc094"/><rect x="163" y="130" width="11" height="11" fill="#ecc094"/><rect x="175" y="130" width="11" height="11" fill="#ffffff"/><rect x="187" y="130" width="11" height="11" fill="#ffffff"/><rect x="12" y="141" width="193" height="13" fill="#000"/><rect x="13" y="142" width="11" height="11" fill="#ecc094"/><rect x="25" y="142" width="11" height="11" fill="#ffffff"/><rect x="37" y="142" width="11" height="11" fill="#ffffff"/><rect x="49" y="142" width="11" height="11" fill="#ecc094"/><rect x="61" y="142" width="11" height="11" fill="#ffffff"/><rect x="73" y="142" width="11" height="11" fill="#ffffff"/><rect x="85" y="142" width="11" height="11" fill="#ffffff"/><rect x="97" y="142" width="11" height="11" fill="#ecc094"/><rect x="109" y="142" width="11" height="11" fill="#ecc094"/><rect x="121" y="142" width="11" height="11" fill="#ecc094"/><rect x="133" y="142" width="11" height="11" fill="#ecc094"/><rect x="145" y="142" width="11" height="11" fill="#ecc094"/><rect x="157" y="142" width="11" height="11" fill="#ffffff"/><rect x="169" y="142" width="11" height="11" fill="#ffffff"/><rect x="181" y="142" width="11" height="11" fill="#ffffff"/><rect x="193" y="142" width="11" height="11" fill="#ffffff"/><rect x="18" y="153" width="181" height="13" fill="#000"/><rect x="19" y="154" width="11" height="11" fill="#ecc094"/><rect x="31" y="154" width="11" height="11" fill="#ffffff"/><rect x="43" y="154" width="11" height="11" fill="#ecc094"/><rect x="55" y="154" width="11" height="11" fill="#ffffff"/><rect x="67" y="154" width="11" height="11" fill="#ffffff"/><rect x="79" y="154" width="11" height="11" fill="#ffffff"/><rect x="91" y="154" width="11" height="11" fill="#ffffff"/><rect x="103" y="154" width="11" height="11" fill="#ffffff"/><rect x="115" y="154" width="11" height="11" fill="#ffffff"/><rect x="127" y="154" width="11" height="11" fill="#ffffff"/><rect x="139" y="154" width="11" height="11" fill="#ffffff"/><rect x="151" y="154" width="11" height="11" fill="#ffffff"/><rect x="163" y="154" width="11" height="11" fill="#ffffff"/><rect x="175" y="154" width="11" height="11" fill="#ffffff"/><rect x="187" y="154" width="11" height="11" fill="#ffffff"/><rect x="12" y="165" width="193" height="13" fill="#000"/><rect x="13" y="166" width="11" height="11" fill="#ecc094"/><rect x="25" y="166" width="11" height="11" fill="#ffffff"/><rect x="37" y="166" width="11" height="11" fill="#ffffff"/><rect x="49" y="166" width="11" height="11" fill="#ecc094"/><rect x="61" y="166" width="11" height="11" fill="#ffffff"/><rect x="73" y="166" width="11" height="11" fill="#4e8682"/><rect x="85" y="166" width="11" height="11" fill="#ecc094"/><rect x="97" y="166" width="11" height="11" fill="#ffffff"/><rect x="109" y="166" width="11" height="11" fill="#ffffff"/><rect x="121" y="166" width="11" height="11" fill="#ffffff"/><rect x="133" y="166" width="11" height="11" fill="#ffffff"/><rect x="145" y="166" width="11" height="11" fill="#ffffff"/><rect x="157" y="166" width="11" height="11" fill="#ecc094"/><rect x="169" y="166" width="11" height="11" fill="#4e8682"/><rect x="181" y="166" width="11" height="11" fill="#ffffff"/><rect x="193" y="166" width="11" height="11" fill="#ffffff"/><rect x="18" y="177" width="181" height="13" fill="#000"/><rect x="19" y="178" width="11" height="11" fill="#ecc094"/><rect x="31" y="178" width="11" height="11" fill="#ffffff"/><rect x="43" y="178" width="11" height="11" fill="#ecc094"/><rect x="55" y="178" width="11" height="11" fill="#ffffff"/><rect x="67" y="178" width="11" height="11" fill="#ecc094"/><rect x="79" y="178" width="11" height="11" fill="#ecc094"/><rect x="91" y="178" width="11" height="11" fill="#ffffff"/><rect x="103" y="178" width="11" height="11" fill="#ffffff"/><rect x="115" y="178" width="11" height="11" fill="#ffffff"/><rect x="127" y="178" width="11" height="11" fill="#ffffff"/><rect x="139" y="178" width="11" height="11" fill="#ffffff"/><rect x="151" y="178" width="11" height="11" fill="#ffffff"/><rect x="163" y="178" width="11" height="11" fill="#ecc094"/><rect x="175" y="178" width="11" height="11" fill="#ecc094"/><rect x="187" y="178" width="11" height="11" fill="#ffffff"/><rect x="12" y="189" width="193" height="13" fill="#000"/><rect x="13" y="190" width="11" height="11" fill="#ecc094"/><rect x="25" y="190" width="11" height="11" fill="#ffffff"/><rect x="37" y="190" width="11" height="11" fill="#ffffff"/><rect x="49" y="190" width="11" height="11" fill="#ecc094"/><rect x="61" y="190" width="11" height="11" fill="#ffffff"/><rect x="73" y="190" width="11" height="11" fill="#ffffff"/><rect x="85" y="190" width="11" height="11" fill="#ffffff"/><rect x="97" y="190" width="11" height="11" fill="#ecc094"/><rect x="109" y="190" width="11" height="11" fill="#ecc094"/><rect x="121" y="190" width="11" height="11" fill="#ecc094"/><rect x="133" y="190" width="11" height="11" fill="#ecc094"/><rect x="145" y="190" width="11" height="11" fill="#ecc094"/><rect x="157" y="190" width="11" height="11" fill="#ffffff"/><rect x="169" y="190" width="11" height="11" fill="#ffffff"/><rect x="181" y="190" width="11" height="11" fill="#ffffff"/><rect x="193" y="190" width="11" height="11" fill="#ffffff"/><rect x="18" y="201" width="181" height="13" fill="#000"/><rect x="19" y="202" width="11" height="11" fill="#ecc094"/><rect x="31" y="202" width="11" height="11" fill="#ffffff"/><rect x="43" y="202" width="11" height="11" fill="#ecc094"/><rect x="55" y="202" width="11" height="11" fill="#ffffff"/><rect x="67" y="202" width="11" height="11" fill="#ffffff"/><rect x="79" y="202" width="11" height="11" fill="#ecc094"/><rect x="91" y="202" width="11" height="11" fill="#ecc094"/><rect x="103" y="202" width="11" height="11" fill="#9a742a"/><rect x="115" y="202" width="11" height="11" fill="#9a742a"/><rect x="127" y="202" width="11" height="11" fill="#9a742a"/><rect x="139" y="202" width="11" height="11" fill="#9a742a"/><rect x="151" y="202" width="11" height="11" fill="#ecc094"/><rect x="163" y="202" width="11" height="11" fill="#ecc094"/><rect x="175" y="202" width="11" height="11" fill="#ffffff"/><rect x="187" y="202" width="11" height="11" fill="#ffffff"/><rect x="12" y="213" width="193" height="13" fill="#000"/><rect x="13" y="214" width="11" height="11" fill="#ffffff"/><rect x="25" y="214" width="11" height="11" fill="#ecc094"/><rect x="37" y="214" width="11" height="11" fill="#ecc094"/><rect x="49" y="214" width="11" height="11" fill="#ffffff"/><rect x="61" y="214" width="11" height="11" fill="#ffffff"/><rect x="73" y="214" width="11" height="11" fill="#ecc094"/><rect x="85" y="214" width="11" height="11" fill="#9a742a"/><rect x="97" y="214" width="11" height="11" fill="#9a742a"/><rect x="109" y="214" width="11" height="11" fill="#9a742a"/><rect x="121" y="214" width="11" height="11" fill="#9a742a"/><rect x="133" y="214" width="11" height="11" fill="#9a742a"/><rect x="145" y="214" width="11" height="11" fill="#9a742a"/><rect x="157" y="214" width="11" height="11" fill="#9a742a"/><rect x="169" y="214" width="11" height="11" fill="#ecc094"/><rect x="181" y="214" width="11" height="11" fill="#ffffff"/><rect x="193" y="214" width="11" height="11" fill="#ffffff"/><rect x="18" y="225" width="181" height="13" fill="#000"/><rect x="19" y="226" width="11" height="11" fill="#ffffff"/><rect x="31" y="226" width="11" height="11" fill="#ecc094"/><rect x="43" y="226" width="11" height="11" fill="#ffffff"/><rect x="55" y="226" width="11" height="11" fill="#ffffff"/><rect x="67" y="226" width="11" height="11" fill="#ecc094"/><rect x="79" y="226" width="11" height="11" fill="#9a742a"/><rect x="91" y="226" width="11" height="11" fill="#9a742a"/><rect x="103" y="226" width="11" height="11" fill="#9a742a"/><rect x="115" y="226" width="11" height="11" fill="#ecc094"/><rect x="127" y="226" width="11" height="11" fill="#ecc094"/><rect x="139" y="226" width="11" height="11" fill="#9a742a"/><rect x="151" y="226" width="11" height="11" fill="#9a742a"/><rect x="163" y="226" width="11" height="11" fill="#9a742a"/><rect x="175" y="226" width="11" height="11" fill="#ecc094"/><rect x="187" y="226" width="11" height="11" fill="#ffffff"/><rect x="12" y="237" width="193" height="13" fill="#000"/><rect x="13" y="238" width="11" height="11" fill="#ffffff"/><rect x="25" y="238" width="11" height="11" fill="#ffffff"/><rect x="37" y="238" width="11" height="11" fill="#ecc094"/><rect x="49" y="238" width="11" height="11" fill="#ffffff"/><rect x="61" y="238" width="11" height="11" fill="#ffffff"/><rect x="73" y="238" width="11" height="11" fill="#ecc094"/><rect x="85" y="238" width="11" height="11" fill="#9a742a"/><rect x="97" y="238" width="11" height="11" fill="#9a742a"/><rect x="109" y="238" width="11" height="11" fill="#ecc094"/><rect x="121" y="238" width="11" height="11" fill="#9a742a"/><rect x="133" y="238" width="11" height="11" fill="#ecc094"/><rect x="145" y="238" width="11" height="11" fill="#9a742a"/><rect x="157" y="238" width="11" height="11" fill="#9a742a"/><rect x="169" y="238" width="11" height="11" fill="#ecc094"/><rect x="181" y="238" width="11" height="11" fill="#ffffff"/><rect x="193" y="238" width="11" height="11" fill="#ffffff"/><rect x="18" y="249" width="181" height="13" fill="#000"/><rect x="19" y="250" width="11" height="11" fill="#ffffff"/><rect x="31" y="250" width="11" height="11" fill="#ecc094"/><rect x="43" y="250" width="11" height="11" fill="#ffffff"/><rect x="55" y="250" width="11" height="11" fill="#ffffff"/><rect x="67" y="250" width="11" height="11" fill="#ecc094"/><rect x="79" y="250" width="11" height="11" fill="#9a742a"/><rect x="91" y="250" width="11" height="11" fill="#9a742a"/><rect x="103" y="250" width="11" height="11" fill="#9a742a"/><rect x="115" y="250" width="11" height="11" fill="#ecc094"/><rect x="127" y="250" width="11" height="11" fill="#ecc094"/><rect x="139" y="250" width="11" height="11" fill="#9a742a"/><rect x="151" y="250" width="11" height="11" fill="#9a742a"/><rect x="163" y="250" width="11" height="11" fill="#9a742a"/><rect x="175" y="250" width="11" height="11" fill="#ecc094"/><rect x="187" y="250" width="11" height="11" fill="#ffffff"/><rect x="12" y="261" width="193" height="13" fill="#000"/><rect x="13" y="262" width="11" height="11" fill="#ffffff"/><rect x="25" y="262" width="11" height="11" fill="#ecc094"/><rect x="37" y="262" width="11" height="11" fill="#ecc094"/><rect x="49" y="262" width="11" height="11" fill="#ffffff"/><rect x="61" y="262" width="11" height="11" fill="#ffffff"/><rect x="73" y="262" width="11" height="11" fill="#ecc094"/><rect x="85" y="262" width="11" height="11" fill="#9a742a"/><rect x="97" y="262" width="11" height="11" fill="#9a742a"/><rect x="109" y="262" width="11" height="11" fill="#9a742a"/><rect x="121" y="262" width="11" height="11" fill="#9a742a"/><rect x="133" y="262" width="11" height="11" fill="#9a742a"/><rect x="145" y="262" width="11" height="11" fill="#9a742a"/><rect x="157" y="262" width="11" height="11" fill="#9a742a"/><rect x="169" y="262" width="11" height="11" fill="#ecc094"/><rect x="181" y="262" width="11" height="11" fill="#ffffff"/><rect x="193" y="262" width="11" height="11" fill="#ffffff"/><rect x="18" y="273" width="181" height="13" fill="#000"/><rect x="19" y="274" width="11" height="11" fill="#ecc094"/><rect x="31" y="274" width="11" height="11" fill="#ffffff"/><rect x="43" y="274" width="11" height="11" fill="#ecc094"/><rect x="55" y="274" width="11" height="11" fill="#ffffff"/><rect x="67" y="274" width="11" height="11" fill="#ffffff"/><rect x="79" y="274" width="11" height="11" fill="#ecc094"/><rect x="91" y="274" width="11" height="11" fill="#ecc094"/><rect x="103" y="274" width="11" height="11" fill="#9a742a"/><rect x="115" y="274" width="11" height="11" fill="#9a742a"/><rect x="127" y="274" width="11" height="11" fill="#9a742a"/><rect x="139" y="274" width="11" height="11" fill="#9a742a"/><rect x="151" y="274" width="11" height="11" fill="#ecc094"/><rect x="163" y="274" width="11" height="11" fill="#ecc094"/><rect x="175" y="274" width="11" height="11" fill="#ffffff"/><rect x="187" y="274" width="11" height="11" fill="#ffffff"/><rect x="12" y="285" width="193" height="13" fill="#000"/><rect x="13" y="286" width="11" height="11" fill="#ecc094"/><rect x="25" y="286" width="11" height="11" fill="#ffffff"/><rect x="37" y="286" width="11" height="11" fill="#ffffff"/><rect x="49" y="286" width="11" height="11" fill="#ecc094"/><rect x="61" y="286" width="11" height="11" fill="#ffffff"/><rect x="73" y="286" width="11" height="11" fill="#ffffff"/><rect x="85" y="286" width="11" height="11" fill="#ffffff"/><rect x="97" y="286" width="11" height="11" fill="#ecc094"/><rect x="109" y="286" width="11" height="11" fill="#ecc094"/><rect x="121" y="286" width="11" height="11" fill="#ecc094"/><rect x="133" y="286" width="11" height="11" fill="#ecc094"/><rect x="145" y="286" width="11" height="11" fill="#ecc094"/><rect x="157" y="286" width="11" height="11" fill="#ffffff"/><rect x="169" y="286" width="11" height="11" fill="#ffffff"/><rect x="181" y="286" width="11" height="11" fill="#ffffff"/><rect x="193" y="286" width="11" height="11" fill="#ffffff"/><rect x="18" y="297" width="181" height="13" fill="#000"/><rect x="19" y="298" width="11" height="11" fill="#ecc094"/><rect x="31" y="298" width="11" height="11" fill="#ffffff"/><rect x="43" y="298" width="11" height="11" fill="#ecc094"/><rect x="55" y="298" width="11" height="11" fill="#ffffff"/><rect x="67" y="298" width="11" height="11" fill="#ffffff"/><rect x="79" y="298" width="11" height="11" fill="#ffffff"/><rect x="91" y="298" width="11" height="11" fill="#ffffff"/><rect x="103" y="298" width="11" height="11" fill="#ffffff"/><rect x="115" y="298" width="11" height="11" fill="#ffffff"/><rect x="127" y="298" width="11" height="11" fill="#ffffff"/><rect x="139" y="298" width="11" height="11" fill="#ffffff"/><rect x="151" y="298" width="11" height="11" fill="#ffffff"/><rect x="163" y="298" width="11" height="11" fill="#ffffff"/><rect x="175" y="298" width="11" height="11" fill="#ffffff"/><rect x="187" y="298" width="11" height="11" fill="#ffffff"/><rect x="12" y="309" width="193" height="13" fill="#000"/><rect x="13" y="310" width="11" height="11" fill="#ecc094"/><rect x="25" y="310" width="11" height="11" fill="#ffffff"/><rect x="37" y="310" width="11" height="11" fill="#ffffff"/><rect x="49" y="310" width="11" height="11" fill="#ecc094"/><rect x="61" y="310" width="11" height="11" fill="#ffffff"/><rect x="73" y="310" width="11" height="11" fill="#4e8682"/><rect x="85" y="310" width="11" height="11" fill="#9a742a"/><rect x="97" y="310" width="11" height="11" fill="#ffffff"/><rect x="109" y="310" width="11" height="11" fill="#ffffff"/><rect x="121" y="310" width="11" height="11" fill="#ffffff"/><rect x="133" y="310" width="11" height="11" fill="#ffffff"/><rect x="145" y="310" width="11" height="11" fill="#ffffff"/><rect x="157" y="310" width="11" height="11" fill="#9a742a"/><rect x="169" y="310" width="11" height="11" fill="#4e8682"/><rect x="181" y="310" width="11" height="11" fill="#ffffff"/><rect x="193" y="310" width="11" height="11" fill="#ffffff"/><rect x="18" y="321" width="181" height="13" fill="#000"/><rect x="19" y="322" width="11" height="11" fill="#ecc094"/><rect x="31" y="322" width="11" height="11" fill="#ffffff"/><rect x="43" y="322" width="11" height="11" fill="#ecc094"/><rect x="55" y="322" width="11" height="11" fill="#ffffff"/><rect x="67" y="322" width="11" height="11" fill="#9a742a"/><rect x="79" y="322" width="11" height="11" fill="#9a742a"/><rect x="91" y="322" width="11" height="11" fill="#ffffff"/><rect x="103" y="322" width="11" height="11" fill="#ffffff"/><rect x="115" y="322" width="11" height="11" fill="#ffffff"/><rect x="127" y="322" width="11" height="11" fill="#ffffff"/><rect x="139" y="322" width="11" height="11" fill="#ffffff"/><rect x="151" y="322" width="11" height="11" fill="#ffffff"/><rect x="163" y="322" width="11" height="11" fill="#9a742a"/><rect x="175" y="322" width="11" height="11" fill="#9a742a"/><rect x="187" y="322" width="11" height="11" fill="#ffffff"/><rect x="12" y="333" width="193" height="13" fill="#000"/><rect x="13" y="334" width="11" height="11" fill="#ecc094"/><rect x="25" y="334" width="11" height="11" fill="#ffffff"/><rect x="37" y="334" width="11" height="11" fill="#ffffff"/><rect x="49" y="334" width="11" height="11" fill="#ecc094"/><rect x="61" y="334" width="11" height="11" fill="#ffffff"/><rect x="73" y="334" width="11" height="11" fill="#ffffff"/><rect x="85" y="334" width="11" height="11" fill="#ffffff"/><rect x="97" y="334" width="11" height="11" fill="#ecc094"/><rect x="109" y="334" width="11" height="11" fill="#ecc094"/><rect x="121" y="334" width="11" height="11" fill="#ecc094"/><rect x="133" y="334" width="11" height="11" fill="#ecc094"/><rect x="145" y="334" width="11" height="11" fill="#ecc094"/><rect x="157" y="334" width="11" height="11" fill="#ffffff"/><rect x="169" y="334" width="11" height="11" fill="#ffffff"/><rect x="181" y="334" width="11" height="11" fill="#ffffff"/><rect x="193" y="334" width="11" height="11" fill="#ffffff"/><rect x="18" y="345" width="181" height="13" fill="#000"/><rect x="19" y="346" width="11" height="11" fill="#ecc094"/><rect x="31" y="346" width="11" height="11" fill="#ffffff"/><rect x="43" y="346" width="11" height="11" fill="#ecc094"/><rect x="55" y="346" width="11" height="11" fill="#ffffff"/><rect x="67" y="346" width="11" height="11" fill="#ffffff"/><rect x="79" y="346" width="11" height="11" fill="#ecc094"/><rect x="91" y="346" width="11" height="11" fill="#ecc094"/><rect x="103" y="346" width="11" height="11" fill="#4e8682"/><rect x="115" y="346" width="11" height="11" fill="#4e8682"/><rect x="127" y="346" width="11" height="11" fill="#4e8682"/><rect x="139" y="346" width="11" height="11" fill="#4e8682"/><rect x="151" y="346" width="11" height="11" fill="#ecc094"/><rect x="163" y="346" width="11" height="11" fill="#ecc094"/><rect x="175" y="346" width="11" height="11" fill="#ffffff"/><rect x="187" y="346" width="11" height="11" fill="#ffffff"/><rect x="12" y="357" width="193" height="13" fill="#000"/><rect x="13" y="358" width="11" height="11" fill="#ffffff"/><rect x="25" y="358" width="11" height="11" fill="#ecc094"/><rect x="37" y="358" width="11" height="11" fill="#ecc094"/><rect x="49" y="358" width="11" height="11" fill="#ffffff"/><rect x="61" y="358" width="11" height="11" fill="#ffffff"/><rect x="73" y="358" width="11" height="11" fill="#ecc094"/><rect x="85" y="358" width="11" height="11" fill="#4e8682"/><rect x="97" y="358" width="11" height="11" fill="#4e8682"/><rect x="109" y="358" width="11" height="11" fill="#4e8682"/><rect x="121" y="358" width="11" height="11" fill="#4e8682"/><rect x="133" y="358" width="11" height="11" fill="#4e8682"/><rect x="145" y="358" width="11" height="11" fill="#4e8682"/><rect x="157" y="358" width="11" height="11" fill="#4e8682"/><rect x="169" y="358" width="11" height="11" fill="#ecc094"/><rect x="181" y="358" width="11" height="11" fill="#ffffff"/><rect x="193" y="358" width="11" height="11" fill="#ffffff"/><rect x="18" y="369" width="181" height="13" fill="#000"/><rect x="19" y="370" width="11" height="11" fill="#ffffff"/><rect x="31" y="370" width="11" height="11" fill="#ecc094"/><rect x="43" y="370" width="11" height="11" fill="#ffffff"/><rect x="55" y="370" width="11" height="11" fill="#ffffff"/><rect x="67" y="370" width="11" height="11" fill="#ecc094"/><rect x="79" y="370" width="11" height="11" fill="#4e8682"/><rect x="91" y="370" width="11" height="11" fill="#4e8682"/><rect x="103" y="370" width="11" height="11" fill="#4e8682"/><rect x="115" y="370" width="11" height="11" fill="#ecc094"/><rect x="127" y="370" width="11" height="11" fill="#ecc094"/><rect x="139" y="370" width="11" height="11" fill="#4e8682"/><rect x="151" y="370" width="11" height="11" fill="#4e8682"/><rect x="163" y="370" width="11" height="11" fill="#4e8682"/><rect x="175" y="370" width="11" height="11" fill="#ecc094"/><rect x="187" y="370" width="11" height="11" fill="#ffffff"/><rect x="12" y="381" width="193" height="13" fill="#000"/><rect x="13" y="382" width="11" height="11" fill="#ffffff"/><rect x="25" y="382" width="11" height="11" fill="#ffffff"/><rect x="37" y="382" width="11" height="11" fill="#ecc094"/><rect x="49" y="382" width="11" height="11" fill="#ffffff"/><rect x="61" y="382" width="11" height="11" fill="#ffffff"/><rect x="73" y="382" width="11" height="11" fill="#ecc094"/><rect x="85" y="382" width="11" height="11" fill="#4e8682"/><rect x="97" y="382" width="11" height="11" fill="#4e8682"/><rect x="109" y="382" width="11" height="11" fill="#ecc094"/><rect x="121" y="382" width="11" height="11" fill="#4e8682"/><rect x="133" y="382" width="11" height="11" fill="#ecc094"/><rect x="145" y="382" width="11" height="11" fill="#4e8682"/><rect x="157" y="382" width="11" height="11" fill="#4e8682"/><rect x="169" y="382" width="11" height="11" fill="#ecc094"/><rect x="181" y="382" width="11" height="11" fill="#ffffff"/><rect x="193" y="382" width="11" height="11" fill="#ffffff"/><rect x="18" y="393" width="181" height="13" fill="#000"/><rect x="19" y="394" width="11" height="11" fill="#ffffff"/><rect x="31" y="394" width="11" height="11" fill="#ecc094"/><rect x="43" y="394" width="11" height="11" fill="#ffffff"/><rect x="55" y="394" width="11" height="11" fill="#ffffff"/><rect x="67" y="394" width="11" height="11" fill="#ecc094"/><rect x="79" y="394" width="11" height="11" fill="#4e8682"/><rect x="91" y="394" width="11" height="11" fill="#4e8682"/><rect x="103" y="394" width="11" height="11" fill="#4e8682"/><rect x="115" y="394" width="11" height="11" fill="#ecc094"/><rect x="127" y="394" width="11" height="11" fill="#ecc094"/><rect x="139" y="394" width="11" height="11" fill="#4e8682"/><rect x="151" y="394" width="11" height="11" fill="#4e8682"/><rect x="163" y="394" width="11" height="11" fill="#4e8682"/><rect x="175" y="394" width="11" height="11" fill="#ecc094"/><rect x="187" y="394" width="11" height="11" fill="#ffffff"/><rect x="12" y="405" width="193" height="13" fill="#000"/><rect x="13" y="406" width="11" height="11" fill="#ffffff"/><rect x="25" y="406" width="11" height="11" fill="#ecc094"/><rect x="37" y="406" width="11" height="11" fill="#ecc094"/><rect x="49" y="406" width="11" height="11" fill="#ffffff"/><rect x="61" y="406" width="11" height="11" fill="#ffffff"/><rect x="73" y="406" width="11" height="11" fill="#ecc094"/><rect x="85" y="406" width="11" height="11" fill="#4e8682"/><rect x="97" y="406" width="11" height="11" fill="#4e8682"/><rect x="109" y="406" width="11" height="11" fill="#4e8682"/><rect x="121" y="406" width="11" height="11" fill="#4e8682"/><rect x="133" y="406" width="11" height="11" fill="#4e8682"/><rect x="145" y="406" width="11" height="11" fill="#4e8682"/><rect x="157" y="406" width="11" height="11" fill="#4e8682"/><rect x="169" y="406" width="11" height="11" fill="#ecc094"/><rect x="181" y="406" width="11" height="11" fill="#ffffff"/><rect x="193" y="406" width="11" height="11" fill="#ffffff"/><rect x="18" y="417" width="181" height="13" fill="#000"/><rect x="19" y="418" width="11" height="11" fill="#ecc094"/><rect x="31" y="418" width="11" height="11" fill="#ffffff"/><rect x="43" y="418" width="11" height="11" fill="#ecc094"/><rect x="55" y="418" width="11" height="11" fill="#ffffff"/><rect x="67" y="418" width="11" height="11" fill="#ffffff"/><rect x="79" y="418" width="11" height="11" fill="#ecc094"/><rect x="91" y="418" width="11" height="11" fill="#ecc094"/><rect x="103" y="418" width="11" height="11" fill="#4e8682"/><rect x="115" y="418" width="11" height="11" fill="#4e8682"/><rect x="127" y="418" width="11" height="11" fill="#4e8682"/><rect x="139" y="418" width="11" height="11" fill="#4e8682"/><rect x="151" y="418" width="11" height="11" fill="#ecc094"/><rect x="163" y="418" width="11" height="11" fill="#ecc094"/><rect x="175" y="418" width="11" height="11" fill="#ffffff"/><rect x="187" y="418" width="11" height="11" fill="#ffffff"/><rect x="12" y="429" width="193" height="13" fill="#000"/><rect x="13" y="430" width="11" height="11" fill="#ecc094"/><rect x="25" y="430" width="11" height="11" fill="#ffffff"/><rect x="37" y="430" width="11" height="11" fill="#ffffff"/><rect x="49" y="430" width="11" height="11" fill="#ecc094"/><rect x="61" y="430" width="11" height="11" fill="#ffffff"/><rect x="73" y="430" width="11" height="11" fill="#ffffff"/><rect x="85" y="430" width="11" height="11" fill="#ffffff"/><rect x="97" y="430" width="11" height="11" fill="#ecc094"/><rect x="109" y="430" width="11" height="11" fill="#ecc094"/><rect x="121" y="430" width="11" height="11" fill="#ecc094"/><rect x="133" y="430" width="11" height="11" fill="#ecc094"/><rect x="145" y="430" width="11" height="11" fill="#ecc094"/><rect x="157" y="430" width="11" height="11" fill="#ffffff"/><rect x="169" y="430" width="11" height="11" fill="#ffffff"/><rect x="181" y="430" width="11" height="11" fill="#ffffff"/><rect x="193" y="430" width="11" height="11" fill="#ffffff"/><rect x="18" y="441" width="181" height="13" fill="#000"/><rect x="19" y="442" width="11" height="11" fill="#ecc094"/><rect x="31" y="442" width="11" height="11" fill="#ffffff"/><rect x="43" y="442" width="11" height="11" fill="#ecc094"/><rect x="55" y="442" width="11" height="11" fill="#ffffff"/><rect x="67" y="442" width="11" height="11" fill="#ffffff"/><rect x="79" y="442" width="11" height="11" fill="#ffffff"/><rect x="91" y="442" width="11" height="11" fill="#ffffff"/><rect x="103" y="442" width="11" height="11" fill="#ffffff"/><rect x="115" y="442" width="11" height="11" fill="#ffffff"/><rect x="127" y="442" width="11" height="11" fill="#ffffff"/><rect x="139" y="442" width="11" height="11" fill="#ffffff"/><rect x="151" y="442" width="11" height="11" fill="#ffffff"/><rect x="163" y="442" width="11" height="11" fill="#ffffff"/><rect x="175" y="442" width="11" height="11" fill="#ffffff"/><rect x="187" y="442" width="11" height="11" fill="#ffffff"/><rect x="12" y="453" width="193" height="13" fill="#000"/><rect x="13" y="454" width="11" height="11" fill="#ecc094"/><rect x="25" y="454" width="11" height="11" fill="#ffffff"/><rect x="37" y="454" width="11" height="11" fill="#ffffff"/><rect x="49" y="454" width="11" height="11" fill="#ecc094"/><rect x="61" y="454" width="11" height="11" fill="#ffffff"/><rect x="73" y="454" width="11" height="11" fill="#4e8682"/><rect x="85" y="454" width="11" height="11" fill="#ecc094"/><rect x="97" y="454" width="11" height="11" fill="#ffffff"/><rect x="109" y="454" width="11" height="11" fill="#ffffff"/><rect x="121" y="454" width="11" height="11" fill="#ffffff"/><rect x="133" y="454" width="11" height="11" fill="#ffffff"/><rect x="145" y="454" width="11" height="11" fill="#ffffff"/><rect x="157" y="454" width="11" height="11" fill="#ecc094"/><rect x="169" y="454" width="11" height="11" fill="#4e8682"/><rect x="181" y="454" width="11" height="11" fill="#ffffff"/><rect x="193" y="454" width="11" height="11" fill="#ffffff"/><rect x="18" y="465" width="181" height="13" fill="#000"/><rect x="19" y="466" width="11" height="11" fill="#ecc094"/><rect x="31" y="466" width="11" height="11" fill="#ffffff"/><rect x="43" y="466" width="11" height="11" fill="#ecc094"/><rect x="55" y="466" width="11" height="11" fill="#ffffff"/><rect x="67" y="466" width="11" height="11" fill="#ecc094"/><rect x="79" y="466" width="11" height="11" fill="#ecc094"/><rect x="91" y="466" width="11" height="11" fill="#ffffff"/><rect x="103" y="466" width="11" height="11" fill="#ffffff"/><rect x="115" y="466" width="11" height="11" fill="#ffffff"/><rect x="127" y="466" width="11" height="11" fill="#ffffff"/><rect x="139" y="466" width="11" height="11" fill="#ffffff"/><rect x="151" y="466" width="11" height="11" fill="#ffffff"/><rect x="163" y="466" width="11" height="11" fill="#ecc094"/><rect x="175" y="466" width="11" height="11" fill="#ecc094"/><rect x="187" y="466" width="11" height="11" fill="#ffffff"/><rect x="12" y="477" width="193" height="13" fill="#000"/><rect x="13" y="478" width="11" height="11" fill="#ecc094"/><rect x="25" y="478" width="11" height="11" fill="#ffffff"/><rect x="37" y="478" width="11" height="11" fill="#ffffff"/><rect x="49" y="478" width="11" height="11" fill="#ecc094"/><rect x="61" y="478" width="11" height="11" fill="#ffffff"/><rect x="73" y="478" width="11" height="11" fill="#ffffff"/><rect x="85" y="478" width="11" height="11" fill="#ffffff"/><rect x="97" y="478" width="11" height="11" fill="#ecc094"/><rect x="109" y="478" width="11" height="11" fill="#ecc094"/><rect x="121" y="478" width="11" height="11" fill="#ecc094"/><rect x="133" y="478" width="11" height="11" fill="#ecc094"/><rect x="145" y="478" width="11" height="11" fill="#ecc094"/><rect x="157" y="478" width="11" height="11" fill="#ffffff"/><rect x="169" y="478" width="11" height="11" fill="#ffffff"/><rect x="181" y="478" width="11" height="11" fill="#ffffff"/><rect x="193" y="478" width="11" height="11" fill="#ffffff"/><rect x="18" y="489" width="181" height="13" fill="#000"/><rect x="19" y="490" width="11" height="11" fill="#ecc094"/><rect x="31" y="490" width="11" height="11" fill="#ffffff"/><rect x="43" y="490" width="11" height="11" fill="#ecc094"/><rect x="55" y="490" width="11" height="11" fill="#ffffff"/><rect x="67" y="490" width="11" height="11" fill="#ffffff"/><rect x="79" y="490" width="11" height="11" fill="#ecc094"/><rect x="91" y="490" width="11" height="11" fill="#ecc094"/><rect x="103" y="490" width="11" height="11" fill="#e8505a"/><rect x="115" y="490" width="11" height="11" fill="#e8505a"/><rect x="127" y="490" width="11" height="11" fill="#e8505a"/><rect x="139" y="490" width="11" height="11" fill="#e8505a"/><rect x="151" y="490" width="11" height="11" fill="#ecc094"/><rect x="163" y="490" width="11" height="11" fill="#ecc094"/><rect x="175" y="490" width="11" height="11" fill="#ffffff"/><rect x="187" y="490" width="11" height="11" fill="#ffffff"/><rect x="12" y="501" width="193" height="13" fill="#000"/><rect x="13" y="502" width="11" height="11" fill="#ffffff"/><rect x="25" y="502" width="11" height="11" fill="#ecc094"/><rect x="37" y="502" width="11" height="11" fill="#ecc094"/><rect x="49" y="502" width="11" height="11" fill="#ffffff"/><rect x="61" y="502" width="11" height="11" fill="#ffffff"/><rect x="73" y="502" width="11" height="11" fill="#ecc094"/><rect x="85" y="502" width="11" height="11" fill="#e8505a"/><rect x="97" y="502" width="11" height="11" fill="#e8505a"/><rect x="109" y="502" width="11" height="11" fill="#e8505a"/><rect x="121" y="502" width="11" height="11" fill="#e8505a"/><rect x="133" y="502" width="11" height="11" fill="#e8505a"/><rect x="145" y="502" width="11" height="11" fill="#e8505a"/><rect x="157" y="502" width="11" height="11" fill="#e8505a"/><rect x="169" y="502" width="11" height="11" fill="#ecc094"/><rect x="181" y="502" width="11" height="11" fill="#ffffff"/><rect x="193" y="502" width="11" height="11" fill="#ffffff"/><rect x="18" y="513" width="181" height="13" fill="#000"/><rect x="19" y="514" width="11" height="11" fill="#ffffff"/><rect x="31" y="514" width="11" height="11" fill="#ecc094"/><rect x="43" y="514" width="11" height="11" fill="#ffffff"/><rect x="55" y="514" width="11" height="11" fill="#ffffff"/><rect x="67" y="514" width="11" height="11" fill="#ecc094"/><rect x="79" y="514" width="11" height="11" fill="#e8505a"/><rect x="91" y="514" width="11" height="11" fill="#e8505a"/><rect x="103" y="514" width="11" height="11" fill="#e8505a"/><rect x="115" y="514" width="11" height="11" fill="#ecc094"/><rect x="127" y="514" width="11" height="11" fill="#ecc094"/><rect x="139" y="514" width="11" height="11" fill="#e8505a"/><rect x="151" y="514" width="11" height="11" fill="#e8505a"/><rect x="163" y="514" width="11" height="11" fill="#e8505a"/><rect x="175" y="514" width="11" height="11" fill="#ecc094"/><rect x="187" y="514" width="11" height="11" fill="#ffffff"/><rect x="12" y="525" width="193" height="13" fill="#000"/><rect x="13" y="526" width="11" height="11" fill="#ffffff"/><rect x="25" y="526" width="11" height="11" fill="#ffffff"/><rect x="37" y="526" width="11" height="11" fill="#ecc094"/><rect x="49" y="526" width="11" height="11" fill="#ffffff"/><rect x="61" y="526" width="11" height="11" fill="#ffffff"/><rect x="73" y="526" width="11" height="11" fill="#ecc094"/><rect x="85" y="526" width="11" height="11" fill="#e8505a"/><rect x="97" y="526" width="11" height="11" fill="#e8505a"/><rect x="109" y="526" width="11" height="11" fill="#ecc094"/><rect x="121" y="526" width="11" height="11" fill="#e8505a"/><rect x="133" y="526" width="11" height="11" fill="#ecc094"/><rect x="145" y="526" width="11" height="11" fill="#e8505a"/><rect x="157" y="526" width="11" height="11" fill="#e8505a"/><rect x="169" y="526" width="11" height="11" fill="#ecc094"/><rect x="181" y="526" width="11" height="11" fill="#ffffff"/><rect x="193" y="526" width="11" height="11" fill="#ffffff"/><rect x="18" y="537" width="181" height="13" fill="#000"/><rect x="19" y="538" width="11" height="11" fill="#ffffff"/><rect x="31" y="538" width="11" height="11" fill="#ecc094"/><rect x="43" y="538" width="11" height="11" fill="#ffffff"/><rect x="55" y="538" width="11" height="11" fill="#ffffff"/><rect x="67" y="538" width="11" height="11" fill="#ecc094"/><rect x="79" y="538" width="11" height="11" fill="#e8505a"/><rect x="91" y="538" width="11" height="11" fill="#e8505a"/><rect x="103" y="538" width="11" height="11" fill="#e8505a"/><rect x="115" y="538" width="11" height="11" fill="#ecc094"/><rect x="127" y="538" width="11" height="11" fill="#ecc094"/><rect x="139" y="538" width="11" height="11" fill="#e8505a"/><rect x="151" y="538" width="11" height="11" fill="#e8505a"/><rect x="163" y="538" width="11" height="11" fill="#e8505a"/><rect x="175" y="538" width="11" height="11" fill="#ecc094"/><rect x="187" y="538" width="11" height="11" fill="#ffffff"/><rect x="12" y="549" width="193" height="13" fill="#000"/><rect x="13" y="550" width="11" height="11" fill="#ffffff"/><rect x="25" y="550" width="11" height="11" fill="#ecc094"/><rect x="37" y="550" width="11" height="11" fill="#ecc094"/><rect x="49" y="550" width="11" height="11" fill="#ffffff"/><rect x="61" y="550" width="11" height="11" fill="#ffffff"/><rect x="73" y="550" width="11" height="11" fill="#ecc094"/><rect x="85" y="550" width="11" height="11" fill="#e8505a"/><rect x="97" y="550" width="11" height="11" fill="#e8505a"/><rect x="109" y="550" width="11" height="11" fill="#e8505a"/><rect x="121" y="550" width="11" height="11" fill="#e8505a"/><rect x="133" y="550" width="11" height="11" fill="#e8505a"/><rect x="145" y="550" width="11" height="11" fill="#e8505a"/><rect x="157" y="550" width="11" height="11" fill="#e8505a"/><rect x="169" y="550" width="11" height="11" fill="#ecc094"/><rect x="181" y="550" width="11" height="11" fill="#ffffff"/><rect x="193" y="550" width="11" height="11" fill="#ffffff"/><rect x="18" y="561" width="181" height="13" fill="#000"/><rect x="19" y="562" width="11" height="11" fill="#ecc094"/><rect x="31" y="562" width="11" height="11" fill="#ffffff"/><rect x="43" y="562" width="11" height="11" fill="#ecc094"/><rect x="55" y="562" width="11" height="11" fill="#ffffff"/><rect x="67" y="562" width="11" height="11" fill="#ffffff"/><rect x="79" y="562" width="11" height="11" fill="#ecc094"/><rect x="91" y="562" width="11" height="11" fill="#ecc094"/><rect x="103" y="562" width="11" height="11" fill="#e8505a"/><rect x="115" y="562" width="11" height="11" fill="#e8505a"/><rect x="127" y="562" width="11" height="11" fill="#e8505a"/><rect x="139" y="562" width="11" height="11" fill="#e8505a"/><rect x="151" y="562" width="11" height="11" fill="#ecc094"/><rect x="163" y="562" width="11" height="11" fill="#ecc094"/><rect x="175" y="562" width="11" height="11" fill="#ffffff"/><rect x="187" y="562" width="11" height="11" fill="#ffffff"/><rect x="12" y="573" width="193" height="13" fill="#000"/><rect x="13" y="574" width="11" height="11" fill="#ecc094"/><rect x="25" y="574" width="11" height="11" fill="#ffffff"/><rect x="37" y="574" width="11" height="11" fill="#ffffff"/><rect x="49" y="574" width="11" height="11" fill="#ecc094"/><rect x="61" y="574" width="11" height="11" fill="#ffffff"/><rect x="73" y="574" width="11" height="11" fill="#ffffff"/><rect x="85" y="574" width="11" height="11" fill="#ffffff"/><rect x="97" y="574" width="11" height="11" fill="#ecc094"/><rect x="109" y="574" width="11" height="11" fill="#ecc094"/><rect x="121" y="574" width="11" height="11" fill="#ecc094"/><rect x="133" y="574" width="11" height="11" fill="#ecc094"/><rect x="145" y="574" width="11" height="11" fill="#ecc094"/><rect x="157" y="574" width="11" height="11" fill="#ffffff"/><rect x="169" y="574" width="11" height="11" fill="#ffffff"/><rect x="181" y="574" width="11" height="11" fill="#ffffff"/><rect x="193" y="574" width="11" height="11" fill="#ffffff"/><rect x="18" y="585" width="181" height="13" fill="#000"/><rect x="19" y="586" width="11" height="11" fill="#ecc094"/><rect x="31" y="586" width="11" height="11" fill="#ffffff"/><rect x="43" y="586" width="11" height="11" fill="#ecc094"/><rect x="55" y="586" width="11" height="11" fill="#ffffff"/><rect x="67" y="586" width="11" height="11" fill="#ffffff"/><rect x="79" y="586" width="11" height="11" fill="#ffffff"/><rect x="91" y="586" width="11" height="11" fill="#ffffff"/><rect x="103" y="586" width="11" height="11" fill="#ffffff"/><rect x="115" y="586" width="11" height="11" fill="#ffffff"/><rect x="127" y="586" width="11" height="11" fill="#ffffff"/><rect x="139" y="586" width="11" height="11" fill="#ffffff"/><rect x="151" y="586" width="11" height="11" fill="#ffffff"/><rect x="163" y="586" width="11" height="11" fill="#ffffff"/><rect x="175" y="586" width="11" height="11" fill="#ffffff"/><rect x="187" y="586" width="11" height="11" fill="#ffffff"/><rect x="12" y="597" width="193" height="13" fill="#000"/><rect x="13" y="598" width="11" height="11" fill="#ecc094"/><rect x="25" y="598" width="11" height="11" fill="#ffffff"/><rect x="37" y="598" width="11" height="11" fill="#ffffff"/><rect x="49" y="598" width="11" height="11" fill="#ecc094"/><rect x="61" y="598" width="11" height="11" fill="#ffffff"/><rect x="73" y="598" width="11" height="11" fill="#4e8682"/><rect x="85" y="598" width="11" height="11" fill="#ecc094"/><rect x="97" y="598" width="11" height="11" fill="#ffffff"/><rect x="109" y="598" width="11" height="11" fill="#ffffff"/><rect x="121" y="598" width="11" height="11" fill="#ffffff"/><rect x="133" y="598" width="11" height="11" fill="#ffffff"/><rect x="145" y="598" width="11" height="11" fill="#ffffff"/><rect x="157" y="598" width="11" height="11" fill="#ecc094"/><rect x="169" y="598" width="11" height="11" fill="#4e8682"/><rect x="181" y="598" width="11" height="11" fill="#ffffff"/><rect x="193" y="598" width="11" height="11" fill="#ffffff"/><rect x="18" y="609" width="181" height="13" fill="#000"/><rect x="19" y="610" width="11" height="11" fill="#ecc094"/><rect x="31" y="610" width="11" height="11" fill="#ffffff"/><rect x="43" y="610" width="11" height="11" fill="#ecc094"/><rect x="55" y="610" width="11" height="11" fill="#ffffff"/><rect x="67" y="610" width="11" height="11" fill="#ecc094"/><rect x="79" y="610" width="11" height="11" fill="#ecc094"/><rect x="91" y="610" width="11" height="11" fill="#ffffff"/><rect x="103" y="610" width="11" height="11" fill="#ffffff"/><rect x="115" y="610" width="11" height="11" fill="#ffffff"/><rect x="127" y="610" width="11" height="11" fill="#ffffff"/><rect x="139" y="610" width="11" height="11" fill="#ffffff"/><rect x="151" y="610" width="11" height="11" fill="#ffffff"/><rect x="163" y="610" width="11" height="11" fill="#ecc094"/><rect x="175" y="610" width="11" height="11" fill="#ecc094"/><rect x="187" y="610" width="11" height="11" fill="#ffffff"/><rect x="12" y="621" width="193" height="13" fill="#000"/><rect x="13" y="622" width="11" height="11" fill="#ecc094"/><rect x="25" y="622" width="11" height="11" fill="#ffffff"/><rect x="37" y="622" width="11" height="11" fill="#ffffff"/><rect x="49" y="622" width="11" height="11" fill="#ecc094"/><rect x="61" y="622" width="11" height="11" fill="#ffffff"/><rect x="73" y="622" width="11" height="11" fill="#ffffff"/><rect x="85" y="622" width="11" height="11" fill="#ffffff"/><rect x="97" y="622" width="11" height="11" fill="#ecc094"/><rect x="109" y="622" width="11" height="11" fill="#ecc094"/><rect x="121" y="622" width="11" height="11" fill="#ecc094"/><rect x="133" y="622" width="11" height="11" fill="#ecc094"/><rect x="145" y="622" width="11" height="11" fill="#ecc094"/><rect x="157" y="622" width="11" height="11" fill="#ffffff"/><rect x="169" y="622" width="11" height="11" fill="#ffffff"/><rect x="181" y="622" width="11" height="11" fill="#ffffff"/><rect x="193" y="622" width="11" height="11" fill="#ffffff"/><rect x="18" y="633" width="181" height="13" fill="#000"/><rect x="19" y="634" width="11" height="11" fill="#ecc094"/><rect x="31" y="634" width="11" height="11" fill="#ffffff"/><rect x="43" y="634" width="11" height="11" fill="#ecc094"/><rect x="55" y="634" width="11" height="11" fill="#ffffff"/><rect x="67" y="634" width="11" height="11" fill="#ffffff"/><rect x="79" y="634" width="11" height="11" fill="#ecc094"/><rect x="91" y="634" width="11" height="11" fill="#ecc094"/><rect x="103" y="634" width="11" height="11" fill="#9a742a"/><rect x="115" y="634" width="11" height="11" fill="#9a742a"/><rect x="127" y="634" width="11" height="11" fill="#9a742a"/><rect x="139" y="634" width="11" height="11" fill="#9a742a"/><rect x="151" y="634" width="11" height="11" fill="#ecc094"/><rect x="163" y="634" width="11" height="11" fill="#ecc094"/><rect x="175" y="634" width="11" height="11" fill="#ffffff"/><rect x="187" y="634" width="11" height="11" fill="#ffffff"/><rect x="12" y="645" width="193" height="13" fill="#000"/><rect x="13" y="646" width="11" height="11" fill="#ffffff"/><rect x="25" y="646" width="11" height="11" fill="#ecc094"/><rect x="37" y="646" width="11" height="11" fill="#ecc094"/><rect x="49" y="646" width="11" height="11" fill="#ffffff"/><rect x="61" y="646" width="11" height="11" fill="#ffffff"/><rect x="73" y="646" width="11" height="11" fill="#ecc094"/><rect x="85" y="646" width="11" height="11" fill="#9a742a"/><rect x="97" y="646" width="11" height="11" fill="#9a742a"/><rect x="109" y="646" width="11" height="11" fill="#9a742a"/><rect x="121" y="646" width="11" height="11" fill="#9a742a"/><rect x="133" y="646" width="11" height="11" fill="#9a742a"/><rect x="145" y="646" width="11" height="11" fill="#9a742a"/><rect x="157" y="646" width="11" height="11" fill="#9a742a"/><rect x="169" y="646" width="11" height="11" fill="#ecc094"/><rect x="181" y="646" width="11" height="11" fill="#ffffff"/><rect x="193" y="646" width="11" height="11" fill="#ffffff"/><rect x="18" y="657" width="181" height="13" fill="#000"/><rect x="19" y="658" width="11" height="11" fill="#ffffff"/><rect x="31" y="658" width="11" height="11" fill="#ecc094"/><rect x="43" y="658" width="11" height="11" fill="#ffffff"/><rect x="55" y="658" width="11" height="11" fill="#ffffff"/><rect x="67" y="658" width="11" height="11" fill="#ecc094"/><rect x="79" y="658" width="11" height="11" fill="#9a742a"/><rect x="91" y="658" width="11" height="11" fill="#9a742a"/><rect x="103" y="658" width="11" height="11" fill="#9a742a"/><rect x="115" y="658" width="11" height="11" fill="#ecc094"/><rect x="127" y="658" width="11" height="11" fill="#ecc094"/><rect x="139" y="658" width="11" height="11" fill="#9a742a"/><rect x="151" y="658" width="11" height="11" fill="#9a742a"/><rect x="163" y="658" width="11" height="11" fill="#9a742a"/><rect x="175" y="658" width="11" height="11" fill="#ecc094"/><rect x="187" y="658" width="11" height="11" fill="#ffffff"/><rect x="12" y="669" width="193" height="13" fill="#000"/><rect x="13" y="670" width="11" height="11" fill="#ffffff"/><rect x="25" y="670" width="11" height="11" fill="#ffffff"/><rect x="37" y="670" width="11" height="11" fill="#ecc094"/><rect x="49" y="670" width="11" height="11" fill="#ffffff"/><rect x="61" y="670" width="11" height="11" fill="#ffffff"/><rect x="73" y="670" width="11" height="11" fill="#ecc094"/><rect x="85" y="670" width="11" height="11" fill="#9a742a"/><rect x="97" y="670" width="11" height="11" fill="#9a742a"/><rect x="109" y="670" width="11" height="11" fill="#ecc094"/><rect x="121" y="670" width="11" height="11" fill="#9a742a"/><rect x="133" y="670" width="11" height="11" fill="#ecc094"/><rect x="145" y="670" width="11" height="11" fill="#9a742a"/><rect x="157" y="670" width="11" height="11" fill="#9a742a"/><rect x="169" y="670" width="11" height="11" fill="#ecc094"/><rect x="181" y="670" width="11" height="11" fill="#ffffff"/><rect x="193" y="670" width="11" height="11" fill="#ffffff"/><rect x="18" y="681" width="181" height="13" fill="#000"/><rect x="19" y="682" width="11" height="11" fill="#ffffff"/><rect x="31" y="682" width="11" height="11" fill="#ecc094"/><rect x="43" y="682" width="11" height="11" fill="#ffffff"/><rect x="55" y="682" width="11" height="11" fill="#ffffff"/><rect x="67" y="682" width="11" height="11" fill="#ecc094"/><rect x="79" y="682" width="11" height="11" fill="#9a742a"/><rect x="91" y="682" width="11" height="11" fill="#9a742a"/><rect x="103" y="682" width="11" height="11" fill="#9a742a"/><rect x="115" y="682" width="11" height="11" fill="#ecc094"/><rect x="127" y="682" width="11" height="11" fill="#ecc094"/><rect x="139" y="682" width="11" height="11" fill="#9a742a"/><rect x="151" y="682" width="11" height="11" fill="#9a742a"/><rect x="163" y="682" width="11" height="11" fill="#9a742a"/><rect x="175" y="682" width="11" height="11" fill="#ecc094"/><rect x="187" y="682" width="11" height="11" fill="#ffffff"/><rect x="12" y="693" width="193" height="13" fill="#000"/><rect x="13" y="694" width="11" height="11" fill="#ffffff"/><rect x="25" y="694" width="11" height="11" fill="#ecc094"/><rect x="37" y="694" width="11" height="11" fill="#ecc094"/><rect x="49" y="694" width="11" height="11" fill="#ffffff"/><rect x="61" y="694" width="11" height="11" fill="#ffffff"/><rect x="73" y="694" width="11" height="11" fill="#ecc094"/><rect x="85" y="694" width="11" height="11" fill="#9a742a"/><rect x="97" y="694" width="11" height="11" fill="#9a742a"/><rect x="109" y="694" width="11" height="11" fill="#9a742a"/><rect x="121" y="694" width="11" height="11" fill="#9a742a"/><rect x="133" y="694" width="11" height="11" fill="#9a742a"/><rect x="145" y="694" width="11" height="11" fill="#9a742a"/><rect x="157" y="694" width="11" height="11" fill="#9a742a"/><rect x="169" y="694" width="11" height="11" fill="#ecc094"/><rect x="181" y="694" width="11" height="11" fill="#ffffff"/><rect x="193" y="694" width="11" height="11" fill="#ffffff"/><rect x="18" y="705" width="181" height="13" fill="#000"/><rect x="19" y="706" width="11" height="11" fill="#ecc094"/><rect x="31" y="706" width="11" height="11" fill="#ffffff"/><rect x="43" y="706" width="11" height="11" fill="#ecc094"/><rect x="55" y="706" width="11" height="11" fill="#ffffff"/><rect x="67" y="706" width="11" height="11" fill="#ffffff"/><rect x="79" y="706" width="11" height="11" fill="#ecc094"/><rect x="91" y="706" width="11" height="11" fill="#ecc094"/><rect x="103" y="706" width="11" height="11" fill="#9a742a"/><rect x="115" y="706" width="11" height="11" fill="#9a742a"/><rect x="127" y="706" width="11" height="11" fill="#9a742a"/><rect x="139" y="706" width="11" height="11" fill="#9a742a"/><rect x="151" y="706" width="11" height="11" fill="#ecc094"/><rect x="163" y="706" width="11" height="11" fill="#ecc094"/><rect x="175" y="706" width="11" height="11" fill="#ffffff"/><rect x="187" y="706" width="11" height="11" fill="#ffffff"/><rect x="12" y="717" width="193" height="13" fill="#000"/><rect x="13" y="718" width="11" height="11" fill="#ecc094"/><rect x="25" y="718" width="11" height="11" fill="#ffffff"/><rect x="37" y="718" width="11" height="11" fill="#ffffff"/><rect x="49" y="718" width="11" height="11" fill="#ecc094"/><rect x="61" y="718" width="11" height="11" fill="#ffffff"/><rect x="73" y="718" width="11" height="11" fill="#ffffff"/><rect x="85" y="718" width="11" height="11" fill="#ffffff"/><rect x="97" y="718" width="11" height="11" fill="#ecc094"/><rect x="109" y="718" width="11" height="11" fill="#ecc094"/><rect x="121" y="718" width="11" height="11" fill="#ecc094"/><rect x="133" y="718" width="11" height="11" fill="#ecc094"/><rect x="145" y="718" width="11" height="11" fill="#ecc094"/><rect x="157" y="718" width="11" height="11" fill="#ffffff"/><rect x="169" y="718" width="11" height="11" fill="#ffffff"/><rect x="181" y="718" width="11" height="11" fill="#ffffff"/><rect x="193" y="718" width="11" height="11" fill="#ffffff"/><rect x="18" y="729" width="181" height="13" fill="#000"/><rect x="19" y="730" width="11" height="11" fill="#ecc094"/><rect x="31" y="730" width="11" height="11" fill="#ffffff"/><rect x="43" y="730" width="11" height="11" fill="#ecc094"/><rect x="55" y="730" width="11" height="11" fill="#ffffff"/><rect x="67" y="730" width="11" height="11" fill="#ffffff"/><rect x="79" y="730" width="11" height="11" fill="#ffffff"/><rect x="91" y="730" width="11" height="11" fill="#ffffff"/><rect x="103" y="730" width="11" height="11" fill="#ffffff"/><rect x="115" y="730" width="11" height="11" fill="#ffffff"/><rect x="127" y="730" width="11" height="11" fill="#ffffff"/><rect x="139" y="730" width="11" height="11" fill="#ffffff"/><rect x="151" y="730" width="11" height="11" fill="#ffffff"/><rect x="163" y="730" width="11" height="11" fill="#ffffff"/><rect x="175" y="730" width="11" height="11" fill="#ffffff"/><rect x="187" y="730" width="11" height="11" fill="#ffffff"/></svg>
<svg class="abs" style="left:336px;top:85px" width="91" height="645" viewBox="336 85 91 645" shape-rendering="crispEdges"><rect x="336" y="85" width="91" height="645" fill="#404040"/><rect x="337" y="82" width="5" height="11" fill="#ecc094"/><rect x="343" y="82" width="11" height="11" fill="#ffffff"/><rect x="355" y="82" width="11" height="11" fill="#ffffff"/><rect x="367" y="82" width="11" height="11" fill="#ecc094"/><rect x="379" y="82" width="11" height="11" fill="#e8505a"/><rect x="391" y="82" width="11" height="11" fill="#e8505a"/><rect x="403" y="82" width="11" height="11" fill="#ecc094"/><rect x="415" y="82" width="11" height="11" fill="#e8505a"/><rect x="337" y="94" width="11" height="11" fill="#ffffff"/><rect x="349" y="94" width="11" height="11" fill="#ffffff"/><rect x="361" y="94" width="11" height="11" fill="#ecc094"/><rect x="373" y="94" width="11" height="11" fill="#e8505a"/><rect x="385" y="94" width="11" height="11" fill="#e8505a"/><rect x="397" y="94" width="11" height="11" fill="#e8505a"/><rect x="409" y="94" width="11" height="11" fill="#ecc094"/><rect x="421" y="94" width="5" height="11" fill="#ecc094"/><rect x="337" y="106" width="5" height="11" fill="#ecc094"/><rect x="343" y="106" width="11" height="11" fill="#ffffff"/><rect x="355" y="106" width="11" height="11" fill="#ffffff"/><rect x="367" y="106" width="11" height="11" fill="#ecc094"/><rect x="379" y="106" width="11" height="11" fill="#e8505a"/><rect x="391" y="106" width="11" height="11" fill="#e8505a"/><rect x="403" y="106" width="11" height="11" fill="#e8505a"/><rect x="415" y="106" width="11" height="11" fill="#e8505a"/><rect x="337" y="118" width="11" height="11" fill="#ecc094"/><rect x="349" y="118" width="11" height="11" fill="#ffffff"/><rect x="361" y="118" width="11" height="11" fill="#ffffff"/><rect x="373" y="118" width="11" height="11" fill="#ecc094"/><rect x="385" y="118" width="11" height="11" fill="#ecc094"/><rect x="397" y="118" width="11" height="11" fill="#e8505a"/><rect x="409" y="118" width="11" height="11" fill="#e8505a"/><rect x="421" y="118" width="5" height="11" fill="#e8505a"/><rect x="337" y="130" width="5" height="11" fill="#ffffff"/><rect x="343" y="130" width="11" height="11" fill="#ecc094"/><rect x="355" y="130" width="11" height="11" fill="#ffffff"/><rect x="367" y="130" width="11" height="11" fill="#ffffff"/><rect x="379" y="130" width="11" height="11" fill="#ffffff"/><rect x="391" y="130" width="11" height="11" fill="#ecc094"/><rect x="403" y="130" width="11" height="11" fill="#ecc094"/><rect x="415" y="130" width="11" height="11" fill="#ecc094"/><rect x="337" y="142" width="11" height="11" fill="#ecc094"/><rect x="349" y="142" width="11" height="11" fill="#ffffff"/><rect x="361" y="142" width="11" height="11" fill="#ffffff"/><rect x="373" y="142" width="11" height="11" fill="#ffffff"/><rect x="385" y="142" width="11" height="11" fill="#ffffff"/><rect x="397" y="142" width="11" height="11" fill="#ffffff"/><rect x="409" y="142" width="11" height="11" fill="#ffffff"/><rect x="421" y="142" width="5" height="11" fill="#ffffff"/><rect x="337" y="154" width="5" height="11" fill="#ffffff"/><rect x="343" y="154" width="11" height="11" fill="#ecc094"/><rect x="355" y="154" width="11" height="11" fill="#ffffff"/><rect x="367" y="154" width="11" height="11" fill="#4e8682"/><rect x="379" y="154" width="11" height="11" fill="#ecc094"/><rect x="391" y="154" width="11" height="11" fill="#ffffff"/><rect x="403" y="154" width="11" height="11" fill="#ffffff"/><rect x="415" y="154" width="11" height="11" fill="#ffffff"/><rect x="337" y="166" width="11" height="11" fill="#ecc094"/><rect x="349" y="166" width="11" height="11" fill="#ffffff"/><rect x="361" y="166" width="11" height="11" fill="#ecc094"/><rect x="373" y="166" width="11" height="11" fill="#ecc094"/><rect x="385" y="166" width="11" height="11" fill="#ffffff"/><rect x="397" y="166" width="11" height="11" fill="#ffffff"/><rect x="409" y="166" width="11" height="11" fill="#ffffff"/><rect x="421" y="166" width="5" height="11" fill="#ffffff"/><rect x="337" y="178" width="5" height="11" fill="#ffffff"/><rect x="343" y="178" width="11" height="11" fill="#ecc094"/><rect x="355" y="178" width="11" height="11" fill="#ffffff"/><rect x="367" y="178" width="11" height="11" fill="#ffffff"/><rect x="379" y="178" width="11" height="11" fill="#ffffff"/><rect x="391" y="178" width="11" height="11" fill="#ecc094"/><rect x="403" y="178" width="11" height="11" fill="#ecc094"/><rect x="415" y="178" width="11" height="11" fill="#ecc094"/><rect x="337" y="190" width="11" height="11" fill="#ecc094"/><rect x="349" y="190" width="11" height="11" fill="#ffffff"/><rect x="361" y="190" width="11" height="11" fill="#ffffff"/><rect x="373" y="190" width="11" height="11" fill="#ecc094"/><rect x="385" y="190" width="11" height="11" fill="#ecc094"/><rect x="397" y="190" width="11" height="11" fill="#9a742a"/><rect x="409" y="190" width="11" height="11" fill="#9a742a"/><rect x="421" y="190" width="5" height="11" fill="#9a742a"/><rect x="337" y="202" width="5" height="11" fill="#ecc094"/><rect x="343" y="202" width="11" height="11" fill="#ffffff"/><rect x="355" y="202" width="11" height="11" fill="#ffffff"/><rect x="367" y="202" width="11" height="11" fill="#ecc094"/><rect x="379" y="202" width="11" height="11" fill="#9a742a"/><rect x="391" y="202" width="11" height="11" fill="#9a742a"/><rect x="403" y="202" width="11" height="11" fill="#9a742a"/><rect x="415" y="202" width="11" height="11" fill="#9a742a"/><rect x="337" y="214" width="11" height="11" fill="#ffffff"/><rect x="349" y="214" width="11" height="11" fill="#ffffff"/><rect x="361" y="214" width="11" height="11" fill="#ecc094"/><rect x="373" y="214" width="11" height="11" fill="#9a742a"/><rect x="385" y="214" width="11" height="11" fill="#9a742a"/><rect x="397" y="214" width="11" height="11" fill="#9a742a"/><rect x="409" y="214" width="11" height="11" fill="#ecc094"/><rect x="421" y="214" width="5" height="11" fill="#ecc094"/><rect x="337" y="226" width="5" height="11" fill="#ecc094"/><rect x="343" y="226" width="11" height="11" fill="#ffffff"/><rect x="355" y="226" width="11" height="11" fill="#ffffff"/><rect x="367" y="226" width="11" height="11" fill="#ecc094"/><rect x="379" y="226" width="11" height="11" fill="#9a742a"/><rect x="391" y="226" width="11" height="11" fill="#9a742a"/><rect x="403" y="226" width="11" height="11" fill="#ecc094"/><rect x="415" y="226" width="11" height="11" fill="#9a742a"/><rect x="337" y="238" width="11" height="11" fill="#ffffff"/><rect x="349" y="238" width="11" height="11" fill="#ffffff"/><rect x="361" y="238" width="11" height="11" fill="#ecc094"/><rect x="373" y="238" width="11" height="11" fill="#9a742a"/><rect x="385" y="238" width="11" height="11" fill="#9a742a"/><rect x="397" y="238" width="11" height="11" fill="#9a742a"/><rect x="409" y="238" width="11" height="11" fill="#ecc094"/><rect x="421" y="238" width="5" height="11" fill="#ecc094"/><rect x="337" y="250" width="5" height="11" fill="#ecc094"/><rect x="343" y="250" width="11" height="11" fill="#ffffff"/><rect x="355" y="250" width="11" height="11" fill="#ffffff"/><rect x="367" y="250" width="11" height="11" fill="#ecc094"/><rect x="379" y="250" width="11" height="11" fill="#9a742a"/><rect x="391" y="250" width="11" height="11" fill="#9a742a"/><rect x="403" y="250" width="11" height="11" fill="#9a742a"/><rect x="415" y="250" width="11" height="11" fill="#9a742a"/><rect x="337" y="262" width="11" height="11" fill="#ecc094"/><rect x="349" y="262" width="11" height="11" fill="#ffffff"/><rect x="361" y="262" width="11" height="11" fill="#ffffff"/><rect x="373" y="262" width="11" height="11" fill="#ecc094"/><rect x="385" y="262" width="11" height="11" fill="#ecc094"/><rect x="397" y="262" width="11" height="11" fill="#9a742a"/><rect x="409" y="262" width="11" height="11" fill="#9a742a"/><rect x="421" y="262" width="5" height="11" fill="#9a742a"/><rect x="337" y="274" width="5" height="11" fill="#ffffff"/><rect x="343" y="274" width="11" height="11" fill="#ecc094"/><rect x="355" y="274" width="11" height="11" fill="#ffffff"/><rect x="367" y="274" width="11" height="11" fill="#ffffff"/><rect x="379" y="274" width="11" height="11" fill="#ffffff"/><rect x="391" y="274" width="11" height="11" fill="#ecc094"/><rect x="403" y="274" width="11" height="11" fill="#ecc094"/><rect x="415" y="274" width="11" height="11" fill="#ecc094"/><rect x="337" y="286" width="11" height="11" fill="#ecc094"/><rect x="349" y="286" width="11" height="11" fill="#ffffff"/><rect x="361" y="286" width="11" height="11" fill="#ffffff"/><rect x="373" y="286" width="11" height="11" fill="#ffffff"/><rect x="385" y="286" width="11" height="11" fill="#ffffff"/><rect x="397" y="286" width="11" height="11" fill="#ffffff"/><rect x="409" y="286" width="11" height="11" fill="#ffffff"/><rect x="421" y="286" width="5" height="11" fill="#ffffff"/><rect x="337" y="298" width="5" height="11" fill="#ffffff"/><rect x="343" y="298" width="11" height="11" fill="#ecc094"/><rect x="355" y="298" width="11" height="11" fill="#ffffff"/><rect x="367" y="298" width="11" height="11" fill="#4e8682"/><rect x="379" y="298" width="11" height="11" fill="#9a742a"/><rect x="391" y="298" width="11" height="11" fill="#ffffff"/><rect x="403" y="298" width="11" height="11" fill="#ffffff"/><rect x="415" y="298" width="11" height="11" fill="#ffffff"/><rect x="337" y="310" width="11" height="11" fill="#ecc094"/><rect x="349" y="310" width="11" height="11" fill="#ffffff"/><rect x="361" y="310" width="11" height="11" fill="#9a742a"/><rect x="373" y="310" width="11" height="11" fill="#9a742a"/><rect x="385" y="310" width="11" height="11" fill="#ffffff"/><rect x="397" y="310" width="11" height="11" fill="#ffffff"/><rect x="409" y="310" width="11" height="11" fill="#ffffff"/><rect x="421" y="310" width="5" height="11" fill="#ffffff"/><rect x="337" y="322" width="5" height="11" fill="#ffffff"/><rect x="343" y="322" width="11" height="11" fill="#ecc094"/><rect x="355" y="322" width="11" height="11" fill="#ffffff"/><rect x="367" y="322" width="11" height="11" fill="#ffffff"/><rect x="379" y="322" width="11" height="11" fill="#ffffff"/><rect x="391" y="322" width="11" height="11" fill="#ecc094"/><rect x="403" y="322" width="11" height="11" fill="#ecc094"/><rect x="415" y="322" width="11" height="11" fill="#ecc094"/><rect x="337" y="334" width="11" height="11" fill="#ecc094"/><rect x="349" y="334" width="11" height="11" fill="#ffffff"/><rect x="361" y="334" width="11" height="11" fill="#ffffff"/><rect x="373" y="334" width="11" height="11" fill="#ecc094"/><rect x="385" y="334" width="11" height="11" fill="#ecc094"/><rect x="397" y="334" width="11" height="11" fill="#4e8682"/><rect x="409" y="334" width="11" height="11" fill="#4e8682"/><rect x="421" y="334" width="5" height="11" fill="#4e8682"/><rect x="337" y="346" width="5" height="11" fill="#ecc094"/><rect x="343" y="346" width="11" height="11" fill="#ffffff"/><rect x="355" y="346" width="11" height="11" fill="#ffffff"/><rect x="367" y="346" width="11" height="11" fill="#ecc094"/><rect x="379" y="346" width="11" height="11" fill="#4e8682"/><rect x="391" y="346" width="11" height="11" fill="#4e8682"/><rect x="403" y="346" width="11" height="11" fill="#4e8682"/><rect x="415" y="346" width="11" height="11" fill="#4e8682"/><rect x="337" y="358" width="11" height="11" fill="#ffffff"/><rect x="349" y="358" width="11" height="11" fill="#ffffff"/><rect x="361" y="358" width="11" height="11" fill="#ecc094"/><rect x="373" y="358" width="11" height="11" fill="#4e8682"/><rect x="385" y="358" width="11" height="11" fill="#4e8682"/><rect x="397" y="358" width="11" height="11" fill="#4e8682"/><rect x="409" y="358" width="11" height="11" fill="#ecc094"/><rect x="421" y="358" width="5" height="11" fill="#ecc094"/><rect x="337" y="370" width="5" height="11" fill="#ecc094"/><rect x="343" y="370" width="11" height="11" fill="#ffffff"/><rect x="355" y="370" width="11" height="11" fill="#ffffff"/><rect x="367" y="370" width="11" height="11" fill="#ecc094"/><rect x="379" y="370" width="11" height="11" fill="#4e8682"/><rect x="391" y="370" width="11" height="11" fill="#4e8682"/><rect x="403" y="370" width="11" height="11" fill="#ecc094"/><rect x="415" y="370" width="11" height="11" fill="#4e8682"/><rect x="337" y="382" width="11" height="11" fill="#ffffff"/><rect x="349" y="382" width="11" height="11" fill="#ffffff"/><rect x="361" y="382" width="11" height="11" fill="#ecc094"/><rect x="373" y="382" width="11" height="11" fill="#4e8682"/><rect x="385" y="382" width="11" height="11" fill="#4e8682"/><rect x="397" y="382" width="11" height="11" fill="#4e8682"/><rect x="409" y="382" width="11" height="11" fill="#ecc094"/><rect x="421" y="382" width="5" height="11" fill="#ecc094"/><rect x="337" y="394" width="5" height="11" fill="#ecc094"/><rect x="343" y="394" width="11" height="11" fill="#ffffff"/><rect x="355" y="394" width="11" height="11" fill="#ffffff"/><rect x="367" y="394" width="11" height="11" fill="#ecc094"/><rect x="379" y="394" width="11" height="11" fill="#4e8682"/><rect x="391" y="394" width="11" height="11" fill="#4e8682"/><rect x="403" y="394" width="11" height="11" fill="#4e8682"/><rect x="415" y="394" width="11" height="11" fill="#4e8682"/><rect x="337" y="406" width="11" height="11" fill="#ecc094"/><rect x="349" y="406" width="11" height="11" fill="#ffffff"/><rect x="361" y="406" width="11" height="11" fill="#ffffff"/><rect x="373" y="406" width="11" height="11" fill="#ecc094"/><rect x="385" y="406" width="11" height="11" fill="#ecc094"/><rect x="397" y="406" width="11" height="11" fill="#4e8682"/><rect x="409" y="406" width="11" height="11" fill="#4e8682"/><rect x="421" y="406" width="5" height="11" fill="#4e8682"/><rect x="337" y="418" width="5" height="11" fill="#ffffff"/><rect x="343" y="418" width="11" height="11" fill="#ecc094"/><rect x="355" y="418" width="11" height="11" fill="#ffffff"/><rect x="367" y="418" width="11" height="11" fill="#ffffff"/><rect x="379" y="418" width="11" height="11" fill="#ffffff"/><rect x="391" y="418" width="11" height="11" fill="#ecc094"/><rect x="403" y="418" width="11" height="11" fill="#ecc094"/><rect x="415" y="418" width="11" height="11" fill="#ecc094"/><rect x="337" y="430" width="11" height="11" fill="#ecc094"/><rect x="349" y="430" width="11" height="11" fill="#ffffff"/><rect x="361" y="430" width="11" height="11" fill="#ffffff"/><rect x="373" y="430" width="11" height="11" fill="#ffffff"/><rect x="385" y="430" width="11" height="11" fill="#ffffff"/><rect x="397" y="430" width="11" height="11" fill="#ffffff"/><rect x="409" y="430" width="11" height="11" fill="#ffffff"/><rect x="421" y="430" width="5" height="11" fill="#ffffff"/><rect x="337" y="442" width="5" height="11" fill="#ffffff"/><rect x="343" y="442" width="11" height="11" fill="#ecc094"/><rect x="355" y="442" width="11" height="11" fill="#ffffff"/><rect x="367" y="442" width="11" height="11" fill="#4e8682"/><rect x="379" y="442" width="11" height="11" fill="#ecc094"/><rect x="391" y="442" width="11" height="11" fill="#ffffff"/><rect x="403" y="442" width="11" height="11" fill="#ffffff"/><rect x="415" y="442" width="11" height="11" fill="#ffffff"/><rect x="337" y="454" width="11" height="11" fill="#ecc094"/><rect x="349" y="454" width="11" height="11" fill="#ffffff"/><rect x="361" y="454" width="11" height="11" fill="#ecc094"/><rect x="373" y="454" width="11" height="11" fill="#ecc094"/><rect x="385" y="454" width="11" height="11" fill="#ffffff"/><rect x="397" y="454" width="11" height="11" fill="#ffffff"/><rect x="409" y="454" width="11" height="11" fill="#ffffff"/><rect x="421" y="454" width="5" height="11" fill="#ffffff"/><rect x="337" y="466" width="5" height="11" fill="#ffffff"/><rect x="343" y="466" width="11" height="11" fill="#ecc094"/><rect x="355" y="466" width="11" height="11" fill="#ffffff"/><rect x="367" y="466" width="11" height="11" fill="#ffffff"/><rect x="379" y="466" width="11" height="11" fill="#ffffff"/><rect x="391" y="466" width="11" height="11" fill="#ecc094"/><rect x="403" y="466" width="11" height="11" fill="#ecc094"/><rect x="415" y="466" width="11" height="11" fill="#ecc094"/><rect x="337" y="478" width="11" height="11" fill="#ecc094"/><rect x="349" y="478" width="11" height="11" fill="#ffffff"/><rect x="361" y="478" width="11" height="11" fill="#ffffff"/><rect x="373" y="478" width="11" height="11" fill="#ecc094"/><rect x="385" y="478" width="11" height="11" fill="#ecc094"/><rect x="397" y="478" width="11" height="11" fill="#e8505a"/><rect x="409" y="478" width="11" height="11" fill="#e8505a"/><rect x="421" y="478" width="5" height="11" fill="#e8505a"/><rect x="337" y="490" width="5" height="11" fill="#ecc094"/><rect x="343" y="490" width="11" height="11" fill="#ffffff"/><rect x="355" y="490" width="11" height="11" fill="#ffffff"/><rect x="367" y="490" width="11" height="11" fill="#ecc094"/><rect x="379" y="490" width="11" height="11" fill="#e8505a"/><rect x="391" y="490" width="11" height="11" fill="#e8505a"/><rect x="403" y="490" width="11" height="11" fill="#e8505a"/><rect x="415" y="490" width="11" height="11" fill="#e8505a"/><rect x="337" y="502" width="11" height="11" fill="#ffffff"/><rect x="349" y="502" width="11" height="11" fill="#ffffff"/><rect x="361" y="502" width="11" height="11" fill="#ecc094"/><rect x="373" y="502" width="11" height="11" fill="#e8505a"/><rect x="385" y="502" width="11" height="11" fill="#e8505a"/><rect x="397" y="502" width="11" height="11" fill="#e8505a"/><rect x="409" y="502" width="11" height="11" fill="#ecc094"/><rect x="421" y="502" width="5" height="11" fill="#ecc094"/><rect x="337" y="514" width="5" height="11" fill="#ecc094"/><rect x="343" y="514" width="11" height="11" fill="#ffffff"/><rect x="355" y="514" width="11" height="11" fill="#ffffff"/><rect x="367" y="514" width="11" height="11" fill="#ecc094"/><rect x="379" y="514" width="11" height="11" fill="#e8505a"/><rect x="391" y="514" width="11" height="11" fill="#e8505a"/><rect x="403" y="514" width="11" height="11" fill="#ecc094"/><rect x="415" y="514" width="11" height="11" fill="#e8505a"/><rect x="337" y="526" width="11" height="11" fill="#ffffff"/><rect x="349" y="526" width="11" height="11" fill="#ffffff"/><rect x="361" y="526" width="11" height="11" fill="#ecc094"/><rect x="373" y="526" width="11" height="11" fill="#e8505a"/><rect x="385" y="526" width="11" height="11" fill="#e8505a"/><rect x="397" y="526" width="11" height="11" fill="#e8505a"/><rect x="409" y="526" width="11" height="11" fill="#ecc094"/><rect x="421" y="526" width="5" height="11" fill="#ecc094"/><rect x="337" y="538" width="5" height="11" fill="#ecc094"/><rect x="343" y="538" width="11" height="11" fill="#ffffff"/><rect x="355" y="538" width="11" height="11" fill="#ffffff"/><rect x="367" y="538" width="11" height="11" fill="#ecc094"/><rect x="379" y="538" width="11" height="11" fill="#e8505a"/><rect x="391" y="538" width="11" height="11" fill="#e8505a"/><rect x="403" y="538" width="11" height="11" fill="#e8505a"/><rect x="415" y="538" width="11" height="11" fill="#e8505a"/><rect x="337" y="550" width="11" height="11" fill="#ecc094"/><rect x="349" y="550" width="11" height="11" fill="#ffffff"/><rect x="361" y="550" width="11" height="11" fill="#ffffff"/><rect x="373" y="550" width="11" height="11" fill="#ecc094"/><rect x="385" y="550" width="11" height="11" fill="#ecc094"/><rect x="397" y="550" width="11" height="11" fill="#e8505a"/><rect x="409" y="550" width="11" height="11" fill="#e8505a"/><rect x="421" y="550" width="5" height="11" fill="#e8505a"/><rect x="337" y="562" width="5" height="11" fill="#ffffff"/><rect x="343" y="562" width="11" height="11" fill="#ecc094"/><rect x="355" y="562" width="11" height="11" fill="#ffffff"/><rect x="367" y="562" width="11" height="11" fill="#ffffff"/><rect x="379" y="562" width="11" height="11" fill="#ffffff"/><rect x="391" y="562" width="11" height="11" fill="#ecc094"/><rect x="403" y="562" width="11" height="11" fill="#ecc094"/><rect x="415" y="562" width="11" height="11" fill="#ecc094"/><rect x="337" y="574" width="11" height="11" fill="#ecc094"/><rect x="349" y="574" width="11" height="11" fill="#ffffff"/><rect x="361" y="574" width="11" height="11" fill="#ffffff"/><rect x="373" y="574" width="11" height="11" fill="#ffffff"/><rect x="385" y="574" width="11" height="11" fill="#ffffff"/><rect x="397" y="574" width="11" height="11" fill="#ffffff"/><rect x="409" y="574" width="11" height="11" fill="#ffffff"/><rect x="421" y="574" width="5" height="11" fill="#ffffff"/><rect x="337" y="586" width="5" height="11" fill="#ffffff"/><rect x="343" y="586" width="11" height="11" fill="#ecc094"/><rect x="355" y="586" width="11" height="11" fill="#ffffff"/><rect x="367" y="586" width="11" height="11" fill="#4e8682"/><rect x="379" y="586" width="11" height="11" fill="#ecc094"/><rect x="391" y="586" width="11" height="11" fill="#ffffff"/><rect x="403" y="586" width="11" height="11" fill="#ffffff"/><rect x="415" y="586" width="11" height="11" fill="#ffffff"/><rect x="337" y="598" width="11" height="11" fill="#ecc094"/><rect x="349" y="598" width="11" height="11" fill="#ffffff"/><rect x="361" y="598" width="11" height="11" fill="#ecc094"/><rect x="373" y="598" width="11" height="11" fill="#ecc094"/><rect x="385" y="598" width="11" height="11" fill="#ffffff"/><rect x="397" y="598" width="11" height="11" fill="#ffffff"/><rect x="409" y="598" width="11" height="11" fill="#ffffff"/><rect x="421" y="598" width="5" height="11" fill="#ffffff"/><rect x="337" y="610" width="5" height="11" fill="#ffffff"/><rect x="343" y="610" width="11" height="11" fill="#ecc094"/><rect x="355" y="610" width="11" height="11" fill="#ffffff"/><rect x="367" y="610" width="11" height="11" fill="#ffffff"/><rect x="379" y="610" width="11" height="11" fill="#ffffff"/><rect x="391" y="610" width="11" height="11" fill="#ecc094"/><rect x="403" y="610" width="11" height="11" fill="#ecc094"/><rect x="415" y="610" width="11" height="11" fill="#ecc094"/><rect x="337" y="622" width="11" height="11" fill="#ecc094"/><rect x="349" y="622" width="11" height="11" fill="#ffffff"/><rect x="361" y="622" width="11" height="11" fill="#ffffff"/><rect x="373" y="622" width="11" height="11" fill="#ecc094"/><rect x="385" y="622" width="11" height="11" fill="#ecc094"/><rect x="397" y="622" width="11" height="11" fill="#9a742a"/><rect x="409" y="622" width="11" height="11" fill="#9a742a"/><rect x="421" y="622" width="5" height="11" fill="#9a742a"/><rect x="337" y="634" width="5" height="11" fill="#ecc094"/><rect x="343" y="634" width="11" height="11" fill="#ffffff"/><rect x="355" y="634" width="11" height="11" fill="#ffffff"/><rect x="367" y="634" width="11" height="11" fill="#ecc094"/><rect x="379" y="634" width="11" height="11" fill="#9a742a"/><rect x="391" y="634" width="11" height="11" fill="#9a742a"/><rect x="403" y="634" width="11" height="11" fill="#9a742a"/><rect x="415" y="634" width="11" height="11" fill="#9a742a"/><rect x="337" y="646" width="11" height="11" fill="#ffffff"/><rect x="349" y="646" width="11" height="11" fill="#ffffff"/><rect x="361" y="646" width="11" height="11" fill="#ecc094"/><rect x="373" y="646" width="11" height="11" fill="#9a742a"/><rect x="385" y="646" width="11" height="11" fill="#9a742a"/><rect x="397" y="646" width="11" height="11" fill="#9a742a"/><rect x="409" y="646" width="11" height="11" fill="#ecc094"/><rect x="421" y="646" width="5" height="11" fill="#ecc094"/><rect x="337" y="658" width="5" height="11" fill="#ecc094"/><rect x="343" y="658" width="11" height="11" fill="#ffffff"/><rect x="355" y="658" width="11" height="11" fill="#ffffff"/><rect x="367" y="658" width="11" height="11" fill="#ecc094"/><rect x="379" y="658" width="11" height="11" fill="#9a742a"/><rect x="391" y="658" width="11" height="11" fill="#9a742a"/><rect x="403" y="658" width="11" height="11" fill="#ecc094"/><rect x="415" y="658" width="11" height="11" fill="#9a742a"/><rect x="337" y="670" width="11" height="11" fill="#ffffff"/><rect x="349" y="670" width="11" height="11" fill="#ffffff"/><rect x="361" y="670" width="11" height="11" fill="#ecc094"/><rect x="373" y="670" width="11" height="11" fill="#9a742a"/><rect x="385" y="670" width="11" height="11" fill="#9a742a"/><rect x="397" y="670" width="11" height="11" fill="#9a742a"/><rect x="409" y="670" width="11" height="11" fill="#ecc094"/><rect x="421" y="670" width="5" height="11" fill="#ecc094"/><rect x="337" y="682" width="5" height="11" fill="#ecc094"/><rect x="343" y="682" width="11" height="11" fill="#ffffff"/><rect x="355" y="682" width="11" height="11" fill="#ffffff"/><rect x="367" y="682" width="11" height="11" fill="#ecc094"/><rect x="379" y="682" width="11" height="11" fill="#9a742a"/><rect x="391" y="682" width="11" height="11" fill="#9a742a"/><rect x="403" y="682" width="11" height="11" fill="#9a742a"/><rect x="415" y="682" width="11" height="11" fill="#9a742a"/><rect x="337" y="694" width="11" height="11" fill="#ecc094"/><rect x="349" y="694" width="11" height="11" fill="#ffffff"/><rect x="361" y="694" width="11" height="11" fill="#ffffff"/><rect x="373" y="694" width="11" height="11" fill="#ecc094"/><rect x="385" y="694" width="11" height="11" fill="#ecc094"/><rect x="397" y="694" width="11" height="11" fill="#9a742a"/><rect x="409" y="694" width="11" height="11" fill="#9a742a"/><rect x="421" y="694" width="5" height="11" fill="#9a742a"/><rect x="337" y="706" width="5" height="11" fill="#ffffff"/><rect x="343" y="706" width="11" height="11" fill="#ecc094"/><rect x="355" y="706" width="11" height="11" fill="#ffffff"/><rect x="367" y="706" width="11" height="11" fill="#ffffff"/><rect x="379" y="706" width="11" height="11" fill="#ffffff"/><rect x="391" y="706" width="11" height="11" fill="#ecc094"/><rect x="403" y="706" width="11" height="11" fill="#ecc094"/><rect x="415" y="706" width="11" height="11" fill="#ecc094"/><rect x="337" y="718" width="11" height="11" fill="#ecc094"/><rect x="349" y="718" width="11" height="11" fill="#ffffff"/><rect x="361" y="718" width="11" height="11" fill="#ffffff"/><rect x="373" y="718" width="11" height="11" fill="#ffffff"/><rect x="385" y="718" width="11" height="11" fill="#ffffff"/><rect x="397" y="718" width="11" height="11" fill="#ffffff"/><rect x="409" y="718" width="11" height="11" fill="#ffffff"/><rect x="421" y="718" width="5" height="11" fill="#ffffff"/></svg>
<div class="t lbl" style="left:79px;top:744px;letter-spacing:0.246px;">Corrected</div>
<div class="t lbl" style="left:358px;top:744px;letter-spacing:0.297px;">Simulation</div>
<div class="t lbl" style="left:832px;top:744px;letter-spacing:0.264px;">Report</div>
<div class="t " style="left:514px;top:90px;letter-spacing:0.000px;">Pattern:</div>
<div class="t " style="left:644px;top:90px;letter-spacing:0.000px;">mL-17.jbb</div>
<div class="t " style="left:514px;top:106px;letter-spacing:0.000px;">Circumference:</div>
<div class="t " style="left:644px;top:106px;letter-spacing:0.000px;">15</div>
<div class="t " style="left:514px;top:122px;letter-spacing:0.000px;">Repeat of colors:</div>
<div class="t " style="left:644px;top:122px;letter-spacing:0.000px;">558 beads</div>
<div class="t " style="left:514px;top:138px;letter-spacing:0.000px;">Rows per repeat:</div>
<div class="t " style="left:644px;top:138px;letter-spacing:0.000px;">37 rows and 3 beads</div>
<div class="t " style="left:514px;top:154px;letter-spacing:0.000px;">Total number of rows:</div>
<div class="t " style="left:644px;top:154px;letter-spacing:0.000px;">66</div>
<div class="t " style="left:514px;top:170px;letter-spacing:0.000px;">Total number of beads:</div>
<div class="t " style="left:644px;top:170px;letter-spacing:0.000px;">990 beads</div>
<div class="t " style="left:521px;top:194px;letter-spacing:0.000px;">450 x</div>
<div class="bx" style="left:554px;top:189px;background:#ffffff"></div>
<div class="t " style="left:600px;top:194px;letter-spacing:0.000px;">78 x</div>
<div class="bx" style="left:627px;top:189px;background:#e8505a"></div>
<div class="t " style="left:673px;top:194px;letter-spacing:0.000px;">84 x</div>
<div class="bx" style="left:700px;top:189px;background:#9a742a"></div>
<div class="t " style="left:746px;top:194px;letter-spacing:0.000px;">60 x</div>
<div class="bx" style="left:773px;top:189px;background:#4e8682"></div>
<div class="t " style="left:813px;top:194px;letter-spacing:0.000px;">318 x</div>
<div class="bx" style="left:846px;top:189px;background:#ecc094"></div>
<div class="t " style="left:514px;top:221px;letter-spacing:0.000px;">List of beads</div>
<div class="bx" style="left:514px;top:235px;background:#ffffff"></div><div class="t" style="left:533px;top:237px">2</div>
<div class="bx" style="left:514px;top:254px;background:#4e8682"></div><div class="t" style="left:533px;top:256px">1</div>
<div class="bx" style="left:514px;top:273px;background:#9a742a"></div><div class="t" style="left:533px;top:275px">1</div>
<div class="bx" style="left:514px;top:292px;background:#ffffff"></div><div class="t" style="left:533px;top:294px">5</div>
<div class="bx" style="left:514px;top:311px;background:#9a742a"></div><div class="t" style="left:533px;top:313px">1</div>
<div class="bx" style="left:514px;top:330px;background:#4e8682"></div><div class="t" style="left:533px;top:332px">1</div>
<div class="bx" style="left:514px;top:349px;background:#ffffff"></div><div class="t" style="left:533px;top:351px">1</div>
<div class="bx" style="left:514px;top:368px;background:#ecc094"></div><div class="t" style="left:533px;top:370px">1</div>
<div class="bx" style="left:514px;top:387px;background:#ffffff"></div><div class="t" style="left:533px;top:389px">2</div>
<div class="bx" style="left:514px;top:406px;background:#ecc094"></div><div class="t" style="left:533px;top:408px">1</div>
<div class="bx" style="left:514px;top:425px;background:#ffffff"></div><div class="t" style="left:533px;top:427px">1</div>
<div class="bx" style="left:514px;top:444px;background:#9a742a"></div><div class="t" style="left:533px;top:446px">2</div>
<div class="bx" style="left:514px;top:463px;background:#ffffff"></div><div class="t" style="left:533px;top:465px">6</div>
<div class="bx" style="left:514px;top:482px;background:#9a742a"></div><div class="t" style="left:533px;top:484px">2</div>
<div class="bx" style="left:514px;top:501px;background:#ffffff"></div><div class="t" style="left:533px;top:503px">1</div>
<div class="bx" style="left:514px;top:520px;background:#ecc094"></div><div class="t" style="left:533px;top:522px">1</div>
<div class="bx" style="left:514px;top:539px;background:#ffffff"></div><div class="t" style="left:533px;top:541px">1</div>
<div class="bx" style="left:514px;top:558px;background:#ecc094"></div><div class="t" style="left:533px;top:560px">1</div>
<div class="bx" style="left:514px;top:577px;background:#ffffff"></div><div class="t" style="left:533px;top:579px">4</div>
<div class="bx" style="left:514px;top:596px;background:#ecc094"></div><div class="t" style="left:533px;top:598px">5</div>
<div class="bx" style="left:514px;top:615px;background:#ffffff"></div><div class="t" style="left:533px;top:617px">3</div>
<div class="bx" style="left:514px;top:634px;background:#ecc094"></div><div class="t" style="left:533px;top:636px">1</div>
<div class="bx" style="left:514px;top:653px;background:#ffffff"></div><div class="t" style="left:533px;top:655px">2</div>
<div class="bx" style="left:514px;top:672px;background:#ecc094"></div><div class="t" style="left:533px;top:674px">1</div>
<div class="bx" style="left:514px;top:691px;background:#ffffff"></div><div class="t" style="left:533px;top:693px">2</div>
<div class="bx" style="left:514px;top:710px;background:#ecc094"></div><div class="t" style="left:533px;top:712px">2</div>
<div class="bx" style="left:562px;top:235px;background:#4e8682"></div><div class="t" style="left:581px;top:237px">4</div>
<div class="bx" style="left:562px;top:254px;background:#ecc094"></div><div class="t" style="left:581px;top:256px">2</div>
<div class="bx" style="left:562px;top:273px;background:#ffffff"></div><div class="t" style="left:581px;top:275px">2</div>
<div class="bx" style="left:562px;top:292px;background:#ecc094"></div><div class="t" style="left:581px;top:294px">1</div>
<div class="bx" style="left:562px;top:311px;background:#ffffff"></div><div class="t" style="left:581px;top:313px">1</div>
<div class="bx" style="left:562px;top:330px;background:#ecc094"></div><div class="t" style="left:581px;top:332px">1</div>
<div class="bx" style="left:562px;top:349px;background:#ffffff"></div><div class="t" style="left:581px;top:351px">2</div>
<div class="bx" style="left:562px;top:368px;background:#ecc094"></div><div class="t" style="left:581px;top:370px">1</div>
<div class="bx" style="left:562px;top:387px;background:#4e8682"></div><div class="t" style="left:581px;top:389px">7</div>
<div class="bx" style="left:562px;top:406px;background:#ecc094"></div><div class="t" style="left:581px;top:408px">1</div>
<div class="bx" style="left:562px;top:425px;background:#ffffff"></div><div class="t" style="left:581px;top:427px">2</div>
<div class="bx" style="left:562px;top:444px;background:#ecc094"></div><div class="t" style="left:581px;top:446px">2</div>
<div class="bx" style="left:562px;top:463px;background:#ffffff"></div><div class="t" style="left:581px;top:465px">2</div>
<div class="bx" style="left:562px;top:482px;background:#ecc094"></div><div class="t" style="left:581px;top:484px">1</div>
<div class="bx" style="left:562px;top:501px;background:#4e8682"></div><div class="t" style="left:581px;top:503px">3</div>
<div class="bx" style="left:562px;top:520px;background:#ecc094"></div><div class="t" style="left:581px;top:522px">2</div>
<div class="bx" style="left:562px;top:539px;background:#4e8682"></div><div class="t" style="left:581px;top:541px">3</div>
<div class="bx" style="left:562px;top:558px;background:#ecc094"></div><div class="t" style="left:581px;top:560px">1</div>
<div class="bx" style="left:562px;top:577px;background:#ffffff"></div><div class="t" style="left:581px;top:579px">2</div>
<div class="bx" style="left:562px;top:596px;background:#ecc094"></div><div class="t" style="left:581px;top:598px">1</div>
<div class="bx" style="left:562px;top:615px;background:#ffffff"></div><div class="t" style="left:581px;top:617px">3</div>
<div class="bx" style="left:562px;top:634px;background:#ecc094"></div><div class="t" style="left:581px;top:636px">1</div>
<div class="bx" style="left:562px;top:653px;background:#4e8682"></div><div class="t" style="left:581px;top:655px">2</div>
<div class="bx" style="left:562px;top:672px;background:#ecc094"></div><div class="t" style="left:581px;top:674px">1</div>
<div class="bx" style="left:562px;top:691px;background:#4e8682"></div><div class="t" style="left:581px;top:693px">1</div>
<div class="bx" style="left:562px;top:710px;background:#ecc094"></div><div class="t" style="left:581px;top:712px">1</div>
<div class="bx" style="left:610px;top:235px;background:#4e8682"></div><div class="t" style="left:629px;top:237px">2</div>
<div class="bx" style="left:610px;top:254px;background:#ecc094"></div><div class="t" style="left:629px;top:256px">1</div>
<div class="bx" style="left:610px;top:273px;background:#ffffff"></div><div class="t" style="left:629px;top:275px">2</div>
<div class="bx" style="left:610px;top:292px;background:#ecc094"></div><div class="t" style="left:629px;top:294px">1</div>
<div class="bx" style="left:610px;top:311px;background:#ffffff"></div><div class="t" style="left:629px;top:313px">3</div>
<div class="bx" style="left:610px;top:330px;background:#ecc094"></div><div class="t" style="left:629px;top:332px">1</div>
<div class="bx" style="left:610px;top:349px;background:#4e8682"></div><div class="t" style="left:629px;top:351px">3</div>
<div class="bx" style="left:610px;top:368px;background:#ecc094"></div><div class="t" style="left:629px;top:370px">2</div>
<div class="bx" style="left:610px;top:387px;background:#4e8682"></div><div class="t" style="left:629px;top:389px">3</div>
<div class="bx" style="left:610px;top:406px;background:#ecc094"></div><div class="t" style="left:629px;top:408px">1</div>
<div class="bx" style="left:610px;top:425px;background:#ffffff"></div><div class="t" style="left:629px;top:427px">2</div>
<div class="bx" style="left:610px;top:444px;background:#ecc094"></div><div class="t" style="left:629px;top:446px">1</div>
<div class="bx" style="left:610px;top:463px;background:#ffffff"></div><div class="t" style="left:629px;top:465px">3</div>
<div class="bx" style="left:610px;top:482px;background:#ecc094"></div><div class="t" style="left:629px;top:484px">1</div>
<div class="bx" style="left:610px;top:501px;background:#4e8682"></div><div class="t" style="left:629px;top:503px">7</div>
<div class="bx" style="left:610px;top:520px;background:#ecc094"></div><div class="t" style="left:629px;top:522px">1</div>
<div class="bx" style="left:610px;top:539px;background:#ffffff"></div><div class="t" style="left:629px;top:541px">2</div>
<div class="bx" style="left:610px;top:558px;background:#ecc094"></div><div class="t" style="left:629px;top:560px">2</div>
<div class="bx" style="left:610px;top:577px;background:#ffffff"></div><div class="t" style="left:629px;top:579px">3</div>
<div class="bx" style="left:610px;top:596px;background:#ecc094"></div><div class="t" style="left:629px;top:598px">2</div>
<div class="bx" style="left:610px;top:615px;background:#4e8682"></div><div class="t" style="left:629px;top:617px">4</div>
<div class="bx" style="left:610px;top:634px;background:#ecc094"></div><div class="t" style="left:629px;top:636px">2</div>
<div class="bx" style="left:610px;top:653px;background:#ffffff"></div><div class="t" style="left:629px;top:655px">2</div>
<div class="bx" style="left:610px;top:672px;background:#ecc094"></div><div class="t" style="left:629px;top:674px">1</div>
<div class="bx" style="left:610px;top:691px;background:#ffffff"></div><div class="t" style="left:629px;top:693px">1</div>
<div class="bx" style="left:610px;top:710px;background:#ecc094"></div><div class="t" style="left:629px;top:712px">1</div>
<div class="bx" style="left:658px;top:235px;background:#ffffff"></div><div class="t" style="left:677px;top:237px">4</div>
<div class="bx" style="left:658px;top:254px;background:#ecc094"></div><div class="t" style="left:677px;top:256px">5</div>
<div class="bx" style="left:658px;top:273px;background:#ffffff"></div><div class="t" style="left:677px;top:275px">3</div>
<div class="bx" style="left:658px;top:292px;background:#ecc094"></div><div class="t" style="left:677px;top:294px">1</div>
<div class="bx" style="left:658px;top:311px;background:#ffffff"></div><div class="t" style="left:677px;top:313px">2</div>
<div class="bx" style="left:658px;top:330px;background:#ecc094"></div><div class="t" style="left:677px;top:332px">1</div>
<div class="bx" style="left:658px;top:349px;background:#ffffff"></div><div class="t" style="left:677px;top:351px">12</div>
<div class="bx" style="left:658px;top:368px;background:#ecc094"></div><div class="t" style="left:677px;top:370px">1</div>
<div class="bx" style="left:658px;top:387px;background:#ffffff"></div><div class="t" style="left:677px;top:389px">1</div>
<div class="bx" style="left:658px;top:406px;background:#ecc094"></div><div class="t" style="left:677px;top:408px">1</div>
<div class="bx" style="left:658px;top:425px;background:#ffffff"></div><div class="t" style="left:677px;top:427px">2</div>
<div class="bx" style="left:658px;top:444px;background:#4e8682"></div><div class="t" style="left:677px;top:446px">1</div>
<div class="bx" style="left:658px;top:463px;background:#ecc094"></div><div class="t" style="left:677px;top:465px">1</div>
<div class="bx" style="left:658px;top:482px;background:#ffffff"></div><div class="t" style="left:677px;top:484px">5</div>
<div class="bx" style="left:658px;top:501px;background:#ecc094"></div><div class="t" style="left:677px;top:503px">1</div>
<div class="bx" style="left:658px;top:520px;background:#4e8682"></div><div class="t" style="left:677px;top:522px">1</div>
<div class="bx" style="left:658px;top:539px;background:#ffffff"></div><div class="t" style="left:677px;top:541px">1</div>
<div class="bx" style="left:658px;top:558px;background:#ecc094"></div><div class="t" style="left:677px;top:560px">1</div>
<div class="bx" style="left:658px;top:577px;background:#ffffff"></div><div class="t" style="left:677px;top:579px">2</div>
<div class="bx" style="left:658px;top:596px;background:#ecc094"></div><div class="t" style="left:677px;top:598px">1</div>
<div class="bx" style="left:658px;top:615px;background:#ffffff"></div><div class="t" style="left:677px;top:617px">1</div>
<div class="bx" style="left:658px;top:634px;background:#ecc094"></div><div class="t" style="left:677px;top:636px">2</div>
<div class="bx" style="left:658px;top:653px;background:#ffffff"></div><div class="t" style="left:677px;top:655px">6</div>
<div class="bx" style="left:658px;top:672px;background:#ecc094"></div><div class="t" style="left:677px;top:674px">2</div>
<div class="bx" style="left:658px;top:691px;background:#ffffff"></div><div class="t" style="left:677px;top:693px">1</div>
<div class="bx" style="left:658px;top:710px;background:#ecc094"></div><div class="t" style="left:677px;top:712px">1</div>
<div class="bx" style="left:706px;top:235px;background:#ffffff"></div><div class="t" style="left:725px;top:237px">1</div>
<div class="bx" style="left:706px;top:254px;background:#ecc094"></div><div class="t" style="left:725px;top:256px">1</div>
<div class="bx" style="left:706px;top:273px;background:#ffffff"></div><div class="t" style="left:725px;top:275px">4</div>
<div class="bx" style="left:706px;top:292px;background:#ecc094"></div><div class="t" style="left:725px;top:294px">5</div>
<div class="bx" style="left:706px;top:311px;background:#ffffff"></div><div class="t" style="left:725px;top:313px">3</div>
<div class="bx" style="left:706px;top:330px;background:#ecc094"></div><div class="t" style="left:725px;top:332px">1</div>
<div class="bx" style="left:706px;top:349px;background:#ffffff"></div><div class="t" style="left:725px;top:351px">2</div>
<div class="bx" style="left:706px;top:368px;background:#ecc094"></div><div class="t" style="left:725px;top:370px">1</div>
<div class="bx" style="left:706px;top:387px;background:#ffffff"></div><div class="t" style="left:725px;top:389px">2</div>
<div class="bx" style="left:706px;top:406px;background:#ecc094"></div><div class="t" style="left:725px;top:408px">2</div>
<div class="bx" style="left:706px;top:425px;background:#e8505a"></div><div class="t" style="left:725px;top:427px">4</div>
<div class="bx" style="left:706px;top:444px;background:#ecc094"></div><div class="t" style="left:725px;top:446px">2</div>
<div class="bx" style="left:706px;top:463px;background:#ffffff"></div><div class="t" style="left:725px;top:465px">2</div>
<div class="bx" style="left:706px;top:482px;background:#ecc094"></div><div class="t" style="left:725px;top:484px">1</div>
<div class="bx" style="left:706px;top:501px;background:#ffffff"></div><div class="t" style="left:725px;top:503px">1</div>
<div class="bx" style="left:706px;top:520px;background:#ecc094"></div><div class="t" style="left:725px;top:522px">1</div>
<div class="bx" style="left:706px;top:539px;background:#ffffff"></div><div class="t" style="left:725px;top:541px">2</div>
<div class="bx" style="left:706px;top:558px;background:#ecc094"></div><div class="t" style="left:725px;top:560px">1</div>
<div class="bx" style="left:706px;top:577px;background:#e8505a"></div><div class="t" style="left:725px;top:579px">7</div>
<div class="bx" style="left:706px;top:596px;background:#ecc094"></div><div class="t" style="left:725px;top:598px">1</div>
<div class="bx" style="left:706px;top:615px;background:#ffffff"></div><div class="t" style="left:725px;top:617px">2</div>
<div class="bx" style="left:706px;top:634px;background:#ecc094"></div><div class="t" style="left:725px;top:636px">2</div>
<div class="bx" style="left:706px;top:653px;background:#ffffff"></div><div class="t" style="left:725px;top:655px">2</div>
<div class="bx" style="left:706px;top:672px;background:#ecc094"></div><div class="t" style="left:725px;top:674px">1</div>
<div class="bx" style="left:706px;top:691px;background:#e8505a"></div><div class="t" style="left:725px;top:693px">3</div>
<div class="bx" style="left:706px;top:710px;background:#ecc094"></div><div class="t" style="left:725px;top:712px">2</div>
<div class="bx" style="left:754px;top:235px;background:#e8505a"></div><div class="t" style="left:773px;top:237px">3</div>
<div class="bx" style="left:754px;top:254px;background:#ecc094"></div><div class="t" style="left:773px;top:256px">1</div>
<div class="bx" style="left:754px;top:273px;background:#ffffff"></div><div class="t" style="left:773px;top:275px">2</div>
<div class="bx" style="left:754px;top:292px;background:#ecc094"></div><div class="t" style="left:773px;top:294px">1</div>
<div class="bx" style="left:754px;top:311px;background:#ffffff"></div><div class="t" style="left:773px;top:313px">3</div>
<div class="bx" style="left:754px;top:330px;background:#ecc094"></div><div class="t" style="left:773px;top:332px">1</div>
<div class="bx" style="left:754px;top:349px;background:#e8505a"></div><div class="t" style="left:773px;top:351px">2</div>
<div class="bx" style="left:754px;top:368px;background:#ecc094"></div><div class="t" style="left:773px;top:370px">1</div>
<div class="bx" style="left:754px;top:387px;background:#e8505a"></div><div class="t" style="left:773px;top:389px">1</div>
<div class="bx" style="left:754px;top:406px;background:#ecc094"></div><div class="t" style="left:773px;top:408px">1</div>
<div class="bx" style="left:754px;top:425px;background:#e8505a"></div><div class="t" style="left:773px;top:427px">2</div>
<div class="bx" style="left:754px;top:444px;background:#ecc094"></div><div class="t" style="left:773px;top:446px">1</div>
<div class="bx" style="left:754px;top:463px;background:#ffffff"></div><div class="t" style="left:773px;top:465px">2</div>
<div class="bx" style="left:754px;top:482px;background:#ecc094"></div><div class="t" style="left:773px;top:484px">1</div>
<div class="bx" style="left:754px;top:501px;background:#ffffff"></div><div class="t" style="left:773px;top:503px">3</div>
<div class="bx" style="left:754px;top:520px;background:#ecc094"></div><div class="t" style="left:773px;top:522px">1</div>
<div class="bx" style="left:754px;top:539px;background:#e8505a"></div><div class="t" style="left:773px;top:541px">3</div>
<div class="bx" style="left:754px;top:558px;background:#ecc094"></div><div class="t" style="left:773px;top:560px">2</div>
<div class="bx" style="left:754px;top:577px;background:#e8505a"></div><div class="t" style="left:773px;top:579px">3</div>
<div class="bx" style="left:754px;top:596px;background:#ecc094"></div><div class="t" style="left:773px;top:598px">1</div>
<div class="bx" style="left:754px;top:615px;background:#ffffff"></div><div class="t" style="left:773px;top:617px">2</div>
<div class="bx" style="left:754px;top:634px;background:#ecc094"></div><div class="t" style="left:773px;top:636px">1</div>
<div class="bx" style="left:754px;top:653px;background:#ffffff"></div><div class="t" style="left:773px;top:655px">3</div>
<div class="bx" style="left:754px;top:672px;background:#ecc094"></div><div class="t" style="left:773px;top:674px">1</div>
<div class="bx" style="left:754px;top:691px;background:#e8505a"></div><div class="t" style="left:773px;top:693px">7</div>
<div class="bx" style="left:754px;top:710px;background:#ecc094"></div><div class="t" style="left:773px;top:712px">1</div>
<div class="bx" style="left:802px;top:235px;background:#ffffff"></div><div class="t" style="left:821px;top:237px">2</div>
<div class="bx" style="left:802px;top:254px;background:#ecc094"></div><div class="t" style="left:821px;top:256px">2</div>
<div class="bx" style="left:802px;top:273px;background:#ffffff"></div><div class="t" style="left:821px;top:275px">3</div>
<div class="bx" style="left:802px;top:292px;background:#ecc094"></div><div class="t" style="left:821px;top:294px">2</div>
<div class="bx" style="left:802px;top:311px;background:#e8505a"></div><div class="t" style="left:821px;top:313px">4</div>
<div class="bx" style="left:802px;top:330px;background:#ecc094"></div><div class="t" style="left:821px;top:332px">2</div>
<div class="bx" style="left:802px;top:349px;background:#ffffff"></div><div class="t" style="left:821px;top:351px">2</div>
<div class="bx" style="left:802px;top:368px;background:#ecc094"></div><div class="t" style="left:821px;top:370px">1</div>
<div class="bx" style="left:802px;top:387px;background:#ffffff"></div><div class="t" style="left:821px;top:389px">1</div>
<div class="bx" style="left:802px;top:406px;background:#ecc094"></div><div class="t" style="left:821px;top:408px">1</div>
<div class="bx" style="left:802px;top:425px;background:#ffffff"></div><div class="t" style="left:821px;top:427px">4</div>
<div class="bx" style="left:802px;top:444px;background:#ecc094"></div><div class="t" style="left:821px;top:446px">5</div>
<div class="bx" style="left:802px;top:463px;background:#ffffff"></div><div class="t" style="left:821px;top:465px">3</div>
<div class="bx" style="left:802px;top:482px;background:#ecc094"></div><div class="t" style="left:821px;top:484px">1</div>
<div class="bx" style="left:802px;top:501px;background:#ffffff"></div><div class="t" style="left:821px;top:503px">2</div>
<div class="bx" style="left:802px;top:520px;background:#ecc094"></div><div class="t" style="left:821px;top:522px">1</div>
<div class="bx" style="left:802px;top:539px;background:#ffffff"></div><div class="t" style="left:821px;top:541px">12</div>
<div class="bx" style="left:802px;top:558px;background:#ecc094"></div><div class="t" style="left:821px;top:560px">1</div>
<div class="bx" style="left:802px;top:577px;background:#ffffff"></div><div class="t" style="left:821px;top:579px">1</div>
<div class="bx" style="left:802px;top:596px;background:#ecc094"></div><div class="t" style="left:821px;top:598px">1</div>
<div class="bx" style="left:802px;top:615px;background:#ffffff"></div><div class="t" style="left:821px;top:617px">2</div>
<div class="bx" style="left:802px;top:634px;background:#4e8682"></div><div class="t" style="left:821px;top:636px">1</div>
<div class="bx" style="left:802px;top:653px;background:#ecc094"></div><div class="t" style="left:821px;top:655px">1</div>
<div class="bx" style="left:802px;top:672px;background:#ffffff"></div><div class="t" style="left:821px;top:674px">5</div>
<div class="bx" style="left:802px;top:691px;background:#ecc094"></div><div class="t" style="left:821px;top:693px">1</div>
<div class="bx" style="left:802px;top:710px;background:#4e8682"></div><div class="t" style="left:821px;top:712px">1</div>
<div class="bx" style="left:850px;top:235px;background:#ffffff"></div><div class="t" style="left:869px;top:237px">1</div>
<div class="bx" style="left:850px;top:254px;background:#ecc094"></div><div class="t" style="left:869px;top:256px">1</div>
<div class="bx" style="left:850px;top:273px;background:#ffffff"></div><div class="t" style="left:869px;top:275px">2</div>
<div class="bx" style="left:850px;top:292px;background:#ecc094"></div><div class="t" style="left:869px;top:294px">1</div>
<div class="bx" style="left:850px;top:311px;background:#ffffff"></div><div class="t" style="left:869px;top:313px">1</div>
<div class="bx" style="left:850px;top:330px;background:#ecc094"></div><div class="t" style="left:869px;top:332px">2</div>
<div class="bx" style="left:850px;top:349px;background:#ffffff"></div><div class="t" style="left:869px;top:351px">6</div>
<div class="bx" style="left:850px;top:368px;background:#ecc094"></div><div class="t" style="left:869px;top:370px">2</div>
<div class="bx" style="left:850px;top:387px;background:#ffffff"></div><div class="t" style="left:869px;top:389px">1</div>
<div class="bx" style="left:850px;top:406px;background:#ecc094"></div><div class="t" style="left:869px;top:408px">1</div>
<div class="bx" style="left:850px;top:425px;background:#ffffff"></div><div class="t" style="left:869px;top:427px">1</div>
<div class="bx" style="left:850px;top:444px;background:#ecc094"></div><div class="t" style="left:869px;top:446px">1</div>
<div class="bx" style="left:850px;top:463px;background:#ffffff"></div><div class="t" style="left:869px;top:465px">4</div>
<div class="bx" style="left:850px;top:482px;background:#ecc094"></div><div class="t" style="left:869px;top:484px">5</div>
<div class="bx" style="left:850px;top:501px;background:#ffffff"></div><div class="t" style="left:869px;top:503px">3</div>
<div class="bx" style="left:850px;top:520px;background:#ecc094"></div><div class="t" style="left:869px;top:522px">1</div>
<div class="bx" style="left:850px;top:539px;background:#ffffff"></div><div class="t" style="left:869px;top:541px">2</div>
<div class="bx" style="left:850px;top:558px;background:#ecc094"></div><div class="t" style="left:869px;top:560px">1</div>
<div class="bx" style="left:850px;top:577px;background:#ffffff"></div><div class="t" style="left:869px;top:579px">2</div>
<div class="bx" style="left:850px;top:596px;background:#ecc094"></div><div class="t" style="left:869px;top:598px">2</div>
<div class="bx" style="left:850px;top:615px;background:#9a742a"></div><div class="t" style="left:869px;top:617px">4</div>
<div class="bx" style="left:850px;top:634px;background:#ecc094"></div><div class="t" style="left:869px;top:636px">2</div>
<div class="bx" style="left:850px;top:653px;background:#ffffff"></div><div class="t" style="left:869px;top:655px">2</div>
<div class="bx" style="left:850px;top:672px;background:#ecc094"></div><div class="t" style="left:869px;top:674px">1</div>
<div class="bx" style="left:850px;top:691px;background:#ffffff"></div><div class="t" style="left:869px;top:693px">1</div>
<div class="bx" style="left:850px;top:710px;background:#ecc094"></div><div class="t" style="left:869px;top:712px">1</div>
<div class="bx" style="left:898px;top:235px;background:#ffffff"></div><div class="t" style="left:917px;top:237px">2</div>
<div class="bx" style="left:898px;top:254px;background:#ecc094"></div><div class="t" style="left:917px;top:256px">1</div>
<div class="bx" style="left:898px;top:273px;background:#9a742a"></div><div class="t" style="left:917px;top:275px">7</div>
<div class="bx" style="left:898px;top:292px;background:#ecc094"></div><div class="t" style="left:917px;top:294px">1</div>
<div class="bx" style="left:898px;top:311px;background:#ffffff"></div><div class="t" style="left:917px;top:313px">2</div>
<div class="bx" style="left:898px;top:330px;background:#ecc094"></div><div class="t" style="left:917px;top:332px">2</div>
<div class="bx" style="left:898px;top:349px;background:#ffffff"></div><div class="t" style="left:917px;top:351px">2</div>
<div class="bx" style="left:898px;top:368px;background:#ecc094"></div><div class="t" style="left:917px;top:370px">1</div>
<div class="bx" style="left:898px;top:387px;background:#9a742a"></div><div class="t" style="left:917px;top:389px">3</div>
<div class="bx" style="left:898px;top:406px;background:#ecc094"></div><div class="t" style="left:917px;top:408px">2</div>
<div class="bx" style="left:898px;top:425px;background:#9a742a"></div><div class="t" style="left:917px;top:427px">3</div>
<div class="bx" style="left:898px;top:444px;background:#ecc094"></div><div class="t" style="left:917px;top:446px">1</div>
<div class="bx" style="left:898px;top:463px;background:#ffffff"></div><div class="t" style="left:917px;top:465px">2</div>
<div class="bx" style="left:898px;top:482px;background:#ecc094"></div><div class="t" style="left:917px;top:484px">1</div>
<div class="bx" style="left:898px;top:501px;background:#ffffff"></div><div class="t" style="left:917px;top:503px">3</div>
<div class="bx" style="left:898px;top:520px;background:#ecc094"></div><div class="t" style="left:917px;top:522px">1</div>
<div class="bx" style="left:898px;top:539px;background:#9a742a"></div><div class="t" style="left:917px;top:541px">2</div>
<div class="bx" style="left:898px;top:558px;background:#ecc094"></div><div class="t" style="left:917px;top:560px">1</div>
<div class="bx" style="left:898px;top:577px;background:#9a742a"></div><div class="t" style="left:917px;top:579px">1</div>
<div class="bx" style="left:898px;top:596px;background:#ecc094"></div><div class="t" style="left:917px;top:598px">1</div>
<div class="bx" style="left:898px;top:615px;background:#9a742a"></div><div class="t" style="left:917px;top:617px">2</div>
<div class="bx" style="left:898px;top:634px;background:#ecc094"></div><div class="t" style="left:917px;top:636px">1</div>
<div class="bx" style="left:898px;top:653px;background:#ffffff"></div><div class="t" style="left:917px;top:655px">2</div>
<div class="bx" style="left:898px;top:672px;background:#ecc094"></div><div class="t" style="left:917px;top:674px">1</div>
<div class="bx" style="left:898px;top:691px;background:#ffffff"></div><div class="t" style="left:917px;top:693px">3</div>
<div class="bx" style="left:898px;top:710px;background:#ecc094"></div><div class="t" style="left:917px;top:712px">1</div>
<div class="bx" style="left:946px;top:235px;background:#9a742a"></div><div class="t" style="left:965px;top:237px">3</div>
<div class="bx" style="left:946px;top:254px;background:#ecc094"></div><div class="t" style="left:965px;top:256px">2</div>
<div class="bx" style="left:946px;top:273px;background:#9a742a"></div><div class="t" style="left:965px;top:275px">3</div>
<div class="bx" style="left:946px;top:292px;background:#ecc094"></div><div class="t" style="left:965px;top:294px">1</div>
<div class="bx" style="left:946px;top:311px;background:#ffffff"></div><div class="t" style="left:965px;top:313px">2</div>
<div class="bx" style="left:946px;top:330px;background:#ecc094"></div><div class="t" style="left:965px;top:332px">1</div>
<div class="bx" style="left:946px;top:349px;background:#ffffff"></div><div class="t" style="left:965px;top:351px">3</div>
<div class="bx" style="left:946px;top:368px;background:#ecc094"></div><div class="t" style="left:965px;top:370px">1</div>
<div class="bx" style="left:946px;top:387px;background:#9a742a"></div><div class="t" style="left:965px;top:389px">7</div>
<div class="bx" style="left:946px;top:406px;background:#ecc094"></div><div class="t" style="left:965px;top:408px">1</div>
<div class="bx" style="left:946px;top:425px;background:#ffffff"></div><div class="t" style="left:965px;top:427px">2</div>
<div class="bx" style="left:946px;top:444px;background:#ecc094"></div><div class="t" style="left:965px;top:446px">2</div>
<div class="bx" style="left:946px;top:463px;background:#ffffff"></div><div class="t" style="left:965px;top:465px">3</div>
<div class="bx" style="left:946px;top:482px;background:#ecc094"></div><div class="t" style="left:965px;top:484px">2</div>
<div class="bx" style="left:946px;top:501px;background:#9a742a"></div><div class="t" style="left:965px;top:503px">4</div>
<div class="bx" style="left:946px;top:520px;background:#ecc094"></div><div class="t" style="left:965px;top:522px">2</div>
<div class="bx" style="left:946px;top:539px;background:#ffffff"></div><div class="t" style="left:965px;top:541px">2</div>
<div class="bx" style="left:946px;top:558px;background:#ecc094"></div><div class="t" style="left:965px;top:560px">1</div>
<div class="bx" style="left:946px;top:577px;background:#ffffff"></div><div class="t" style="left:965px;top:579px">1</div>
<div class="bx" style="left:946px;top:596px;background:#ecc094"></div><div class="t" style="left:965px;top:598px">1</div>
<div class="bx" style="left:946px;top:615px;background:#ffffff"></div><div class="t" style="left:965px;top:617px">4</div>
<div class="bx" style="left:946px;top:634px;background:#ecc094"></div><div class="t" style="left:965px;top:636px">5</div>
<div class="bx" style="left:946px;top:653px;background:#ffffff"></div><div class="t" style="left:965px;top:655px">3</div>
<div class="bx" style="left:946px;top:672px;background:#ecc094"></div><div class="t" style="left:965px;top:674px">1</div>
<div class="bx" style="left:946px;top:691px;background:#ffffff"></div><div class="t" style="left:965px;top:693px">2</div>
<div class="bx" style="left:946px;top:710px;background:#ecc094"></div><div class="t" style="left:965px;top:712px">1</div>
<div class="bx" style="left:994px;top:235px;background:#ffffff"></div><div class="t" style="left:1013px;top:237px">12</div>
<div class="bx" style="left:994px;top:254px;background:#ecc094"></div><div class="t" style="left:1013px;top:256px">1</div>
<div class="bx" style="left:994px;top:273px;background:#ffffff"></div><div class="t" style="left:1013px;top:275px">1</div>
<div class="bx" style="left:994px;top:292px;background:#ecc094"></div><div class="t" style="left:1013px;top:294px">1</div>
</body></html>
